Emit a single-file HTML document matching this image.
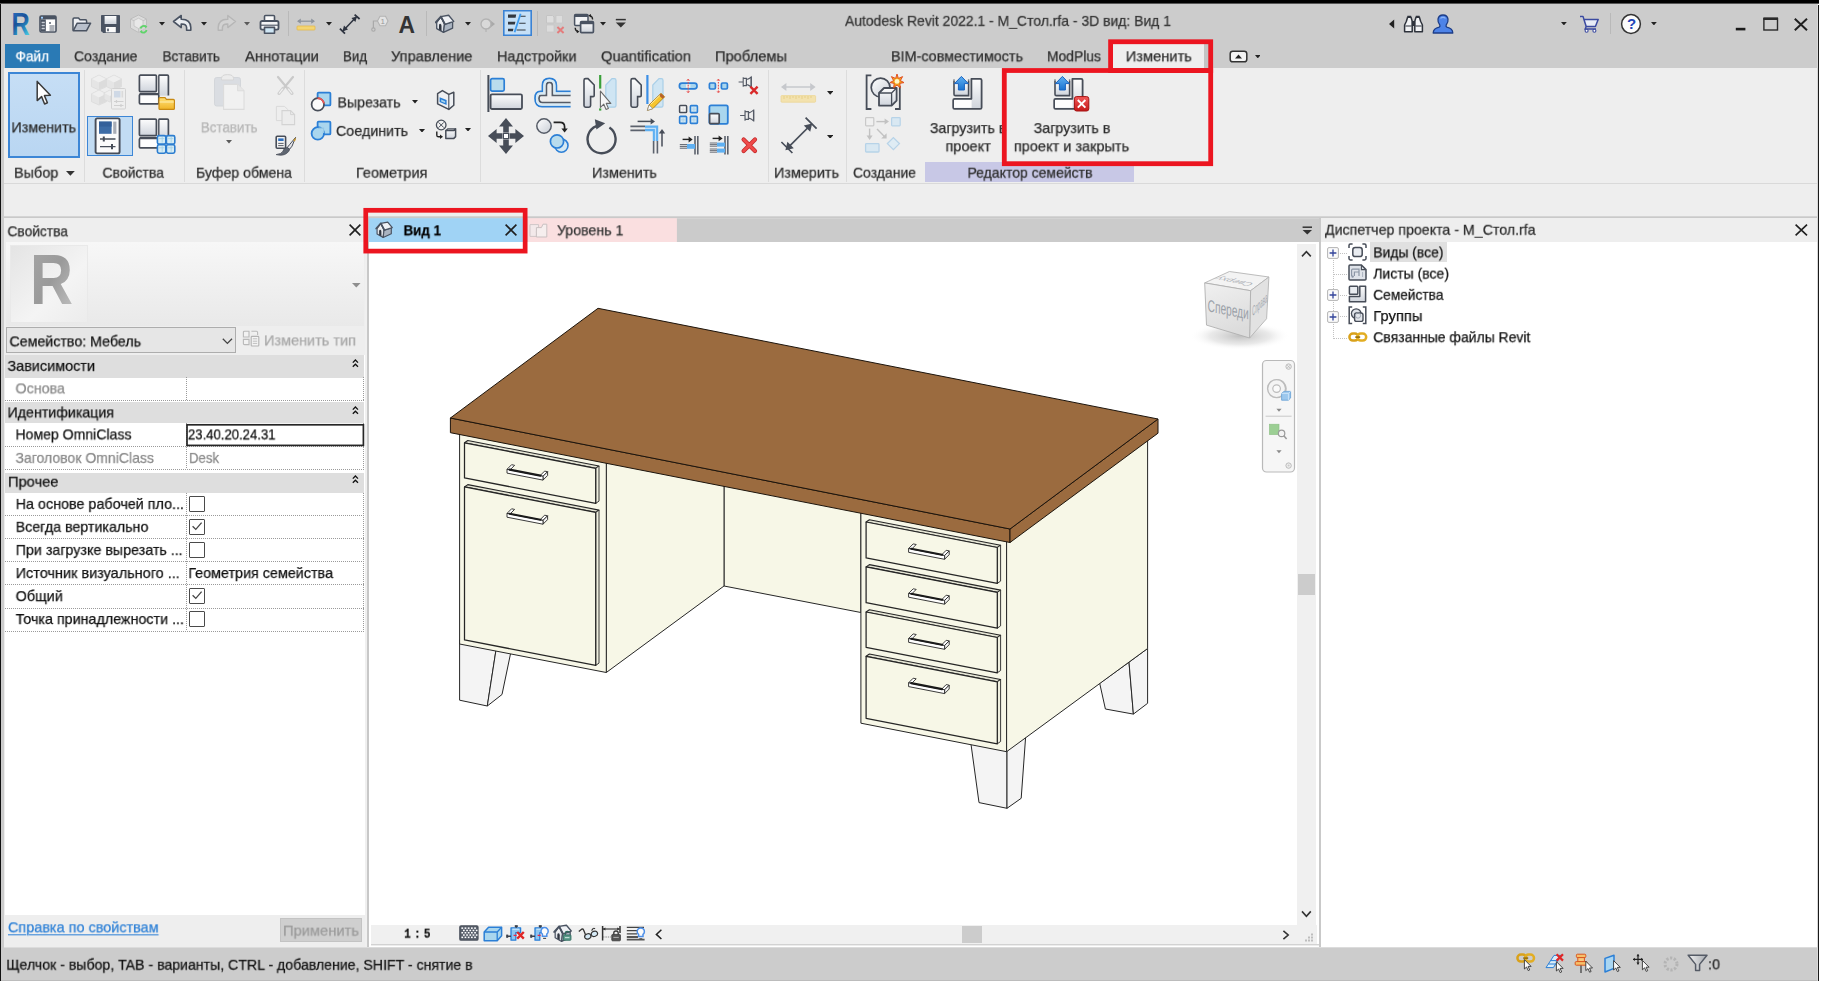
<!DOCTYPE html>
<html lang="ru"><head><meta charset="utf-8"><title>Autodesk Revit 2022.1 - М_Стол.rfa - 3D вид: Вид 1</title>
<style>
html,body{margin:0;padding:0;background:#fff;}
#app{position:relative;width:1821px;height:981px;overflow:hidden;background:#fff;font-family:"Liberation Sans",sans-serif;}
#app div,#app span,#app svg{position:absolute;}
.t{-webkit-text-stroke:0.25px currentColor;will-change:transform;white-space:nowrap;line-height:20px;height:20px;transform-origin:0 50%;font-family:"Liberation Sans",sans-serif;}
.hd{left:5px;width:359px;height:1px;background-image:linear-gradient(90deg,#9a9a9a 50%,transparent 50%);background-size:2px 1px;}
.vd{width:1px;background-image:linear-gradient(180deg,#9a9a9a 50%,transparent 50%);background-size:1px 2px;}
.cb{left:189px;background:#fff;border:1px solid #4a4a4a;box-sizing:border-box;width:16px;height:16px;border-radius:1px;}

</style></head>
<body>
<div id="app">
<!-- window chrome -->
<div style="left:0;top:0;width:1819px;height:3px;background:#000"></div><div style="left:0;top:3px;width:1819px;height:1px;background:#555"></div>
<div style="left:0;top:4px;width:1px;height:977px;background:#111"></div>
<div style="left:1px;top:4px;width:3px;height:977px;background:#cccccc"></div>
<div style="left:1817px;top:4px;width:1px;height:977px;background:#d8d8d8"></div><div style="left:1818px;top:5px;width:1px;height:976px;background:#1a1a1a"></div>
<!-- title + tab strip -->
<div style="left:4px;top:4px;width:1813px;height:64px;background:#cccccc"></div>
<div style="left:5px;top:44px;width:55px;height:24px;background:#2a7ab5"></div>
<div style="left:1113px;top:44px;width:91px;height:24px;background:#eee"></div><div style="left:1204px;top:44px;width:5px;height:24px;background:#c4c4c4"></div>
<!-- ribbon -->
<div style="left:4px;top:68px;width:1813px;height:115px;background:#eeeeee"></div>
<div style="left:4px;top:183px;width:1813px;height:1px;background:#d9d9d9"></div>
<div style="left:4px;top:184px;width:1813px;height:33px;background:#eeeeee"></div>
<svg style="left:4px;top:216px" width="1813" height="3" viewBox="0 0 1813 3"><rect x="0" y="0.3" width="1813" height="1.9" fill="#c9c9c9"/></svg>
<!-- ribbon panel separators -->
<div style="left:84px;top:70px;width:1px;height:112px;background:#dcdcdc"></div>
<div style="left:184px;top:70px;width:1px;height:112px;background:#dcdcdc"></div>
<div style="left:304px;top:70px;width:1px;height:112px;background:#dcdcdc"></div>
<div style="left:480px;top:70px;width:1px;height:112px;background:#dcdcdc"></div>
<div style="left:768px;top:70px;width:1px;height:112px;background:#dcdcdc"></div>
<div style="left:846px;top:70px;width:1px;height:112px;background:#dcdcdc"></div>
<!-- ribbon active buttons -->
<div style="left:7.5px;top:72px;width:68.5px;height:81.7px;background:linear-gradient(180deg,#c6def5,#b9d6f2);border:2px solid #3c86d6"></div>
<div style="left:87px;top:116px;width:46px;height:40px;box-sizing:border-box;background:#c2dcf3;border:1px solid #3c86d6"></div>
<div style="left:503px;top:10px;width:29px;height:26px;box-sizing:border-box;background:#c6e0f7;border:1px solid #3a82d4;box-shadow:inset 0 0 0 0.6px #3a82d4"></div>
<!-- family editor contextual label -->
<div style="left:925px;top:162px;width:209px;height:20px;background:#c8c8e6"></div>
<!-- quick-access separators -->
<div style="left:288px;top:11px;width:1px;height:25px;background:#b9b9b9"></div>
<div style="left:426px;top:11px;width:1px;height:25px;background:#b9b9b9"></div>
<div style="left:537px;top:11px;width:1px;height:25px;background:#b9b9b9"></div>
<div style="left:1610px;top:13px;width:1px;height:21px;background:#b9b9b9"></div>

<!-- ===== properties palette ===== -->
<div style="left:4px;top:218px;width:363px;height:729px;background:#eeeeee"></div>
<div style="left:6px;top:242px;width:358px;height:84px;background:linear-gradient(180deg,#f7f7f7,#e9e9e9)"></div>
<div style="left:10px;top:245px;width:78px;height:78px;background:linear-gradient(135deg,#e4e4e4,#f4f4f4 60%,#ececec);border:1px solid #e9e9e9;box-sizing:border-box"></div>
<div style="left:6px;top:327px;width:230px;height:26px;background:#e6e6e6;border:1px solid #adadad;box-sizing:border-box"></div>
<!-- grid -->
<div style="left:5px;top:355px;width:360px;height:560px;background:#fff"></div>
<div style="left:5px;top:355px;width:359px;height:22.5px;background:#dedede"></div>
<div style="left:5px;top:402px;width:359px;height:21.4px;background:#dedede"></div>
<div style="left:5px;top:473px;width:359px;height:20px;background:#dedede"></div>
<!-- dotted grid lines -->
<div class="hd" style="top:400px"></div>
<div class="hd" style="top:446px"></div>
<div class="hd" style="top:469px"></div>
<div class="hd" style="top:515px"></div>
<div class="hd" style="top:538px"></div>
<div class="hd" style="top:561px"></div>
<div class="hd" style="top:584px"></div>
<div class="hd" style="top:608px"></div>
<div class="hd" style="top:631px"></div>
<div class="vd" style="left:186px;top:377px;height:23px"></div>
<div class="vd" style="left:186px;top:423px;height:46px"></div>
<div class="vd" style="left:186px;top:493px;height:138px"></div>
<div class="vd" style="left:363px;top:377px;height:23px"></div>
<div class="vd" style="left:363px;top:423px;height:46px"></div>
<div class="vd" style="left:363px;top:493px;height:138px"></div>
<!-- focused input -->
<svg style="left:184px;top:422px" width="182" height="26" viewBox="184 422 182 26"><rect x="187" y="424.8" width="176.4" height="20.6" fill="#fff" stroke="#262626" stroke-width="1.7"/></svg>
<!-- checkboxes -->
<div class="cb" style="top:496px"></div>
<div class="cb" style="top:519px"></div>
<div class="cb" style="top:542px"></div>
<div class="cb" style="top:588px"></div>
<div class="cb" style="top:611px"></div>
<!-- apply button -->
<div style="left:280px;top:918px;width:82px;height:24px;background:#cfcfcf;border:1px solid #c3c3c3;box-sizing:border-box"></div>
<!-- palette right edge -->
<div style="left:365px;top:218px;width:2px;height:729px;background:#f0f0f0"></div>
<div style="left:367px;top:218px;width:2px;height:729px;background:#c8c8c8"></div>

<!-- ===== view area ===== -->
<svg style="left:369px;top:216px" width="950" height="28" viewBox="369 216 950 28"><rect x="369" y="218.2" width="950.3" height="23.8" fill="#cbcbcb"/><rect x="369" y="218.2" width="155" height="23.9" fill="#a0d3f5"/><rect x="527.6" y="218.2" width="149.3" height="23.9" fill="#fadfe0"/></svg>
<div style="left:369px;top:242px;width:950px;height:683px;background:#fff"></div>
<!-- scrollbars -->
<div style="left:1297px;top:244px;width:19px;height:681px;background:#f0f0f0"></div>
<div style="left:1298px;top:574px;width:17px;height:21px;background:#cccccc"></div>
<div style="left:371px;top:925px;width:946px;height:19px;background:#f0f0f0"></div>
<div style="left:962px;top:926px;width:20px;height:17px;background:#cccccc"></div>
<div style="left:371px;top:944px;width:948px;height:1px;background:#d2d2d2"></div><div style="left:371px;top:945px;width:948px;height:1px;background:#ececec"></div>
<!-- view right edge -->
<div style="left:1319px;top:218px;width:2px;height:729px;background:#c9c9c9"></div>

<!-- ===== project browser ===== -->
<div style="left:1321px;top:218px;width:496px;height:24px;background:#eeeeee"></div>
<div style="left:1321px;top:242px;width:496px;height:705px;background:#fff"></div>
<div style="left:1370px;top:242px;width:77px;height:20.4px;background:#e0e0e0"></div>

<!-- ===== status bar ===== -->
<div style="left:4px;top:947px;width:1813px;height:1px;background:#dcdcdc"></div><div style="left:4px;top:948px;width:1813px;height:33px;background:#cccccc"></div><div style="left:1px;top:980px;width:1816px;height:1px;background:#bcbcbc"></div>

<svg style="left:369px;top:243px" width="928" height="682" viewBox="369 243 928 682">
<polygon points="1099.7,683.3 1129.0,662.2 1133.4,714.1 1105.4,709.0" fill="#f4f4f4" stroke="#262626" stroke-width="1" stroke-linejoin="round"/>
<polygon points="1129.0,662.2 1147.6,648.5 1147.6,703.3 1133.4,714.1" fill="#f4f4f4" stroke="#262626" stroke-width="1" stroke-linejoin="round"/>
<polygon points="459.6,640.0 496.3,648.0 487.3,706.0 459.6,700.2" fill="#f4f4f4" stroke="#262626" stroke-width="1" stroke-linejoin="round"/>
<polygon points="496.3,648.0 511.3,650.0 502.0,694.5 487.3,706.0" fill="#f4f4f4" stroke="#262626" stroke-width="1" stroke-linejoin="round"/>
<polygon points="970.7,742.0 1007.0,749.0 1007.0,808.3 979.0,802.6" fill="#f4f4f4" stroke="#262626" stroke-width="1" stroke-linejoin="round"/>
<polygon points="1007.0,749.0 1025.7,736.0 1021.2,798.3 1007.0,808.3" fill="#f4f4f4" stroke="#262626" stroke-width="1" stroke-linejoin="round"/>
<polygon points="724.0,480.0 860.9,507.0 860.9,612.5 724.0,586.0" fill="#f7f7e7" stroke="#262626" stroke-width="1" stroke-linejoin="round"/>
<polygon points="606.3,458.0 724.0,480.0 724.0,586.0 606.3,672.5" fill="#f7f7e7" stroke="#262626" stroke-width="1" stroke-linejoin="round"/>
<polygon points="459.6,430.0 606.3,458.0 606.3,672.5 459.6,644.0" fill="#f7f7e7" stroke="#262626" stroke-width="1" stroke-linejoin="round"/>
<polygon points="860.9,507.0 1006.6,536.0 1006.6,751.7 860.9,723.2" fill="#f7f7e7" stroke="#262626" stroke-width="1" stroke-linejoin="round"/>
<polygon points="1006.6,536.0 1147.6,436.0 1147.6,648.5 1006.6,751.7" fill="#f7f7e7" stroke="#262626" stroke-width="1" stroke-linejoin="round"/>
<polygon points="464.5,442.8 467.8,440.5 599.0,466.0 595.7,468.3" fill="#e4e4d4" stroke="#262626" stroke-width="1.1" stroke-linejoin="round"/>
<polygon points="595.7,468.3 599.0,466.0 599.0,501.1 595.7,503.4" fill="#efefdf" stroke="#262626" stroke-width="0.9" stroke-linejoin="round"/>
<polygon points="464.5,442.8 595.7,468.3 595.7,503.4 464.5,477.9" fill="#f7f7e7" stroke="#262626" stroke-width="1.25" stroke-linejoin="round"/>
<polygon points="507.0,469.3 511.6,464.7 514.6,465.3 510.0,469.9" fill="#fff" stroke="#262626" stroke-width="0.9" stroke-linejoin="round"/>
<polygon points="540.0,475.7 544.6,471.1 547.6,471.7 543.0,476.3" fill="#fff" stroke="#262626" stroke-width="0.9" stroke-linejoin="round"/>
<polygon points="543.0,476.3 547.6,471.7 547.6,475.5 543.0,480.1" fill="#f4f4f4" stroke="#262626" stroke-width="0.9" stroke-linejoin="round"/>
<polygon points="507.0,469.3 543.0,476.3 543.0,480.1 507.0,473.1" fill="#fff" stroke="#262626" stroke-width="0.9" stroke-linejoin="round"/>
<polyline points="509.6,469.6 540.4,475.6" fill="none" stroke="#1a1a1a" stroke-width="2.1" stroke-linecap="round"/>
<polygon points="464.5,486.9 467.8,484.6 599.0,510.1 595.7,512.4" fill="#e4e4d4" stroke="#262626" stroke-width="1.1" stroke-linejoin="round"/>
<polygon points="595.7,512.4 599.0,510.1 599.0,663.1 595.7,665.4" fill="#efefdf" stroke="#262626" stroke-width="0.9" stroke-linejoin="round"/>
<polygon points="464.5,486.9 595.7,512.4 595.7,665.4 464.5,639.9" fill="#f7f7e7" stroke="#262626" stroke-width="1.25" stroke-linejoin="round"/>
<polygon points="507.0,513.4 511.6,508.8 514.6,509.4 510.0,514.0" fill="#fff" stroke="#262626" stroke-width="0.9" stroke-linejoin="round"/>
<polygon points="540.0,519.8 544.6,515.2 547.6,515.8 543.0,520.4" fill="#fff" stroke="#262626" stroke-width="0.9" stroke-linejoin="round"/>
<polygon points="543.0,520.4 547.6,515.8 547.6,519.6 543.0,524.2" fill="#f4f4f4" stroke="#262626" stroke-width="0.9" stroke-linejoin="round"/>
<polygon points="507.0,513.4 543.0,520.4 543.0,524.2 507.0,517.2" fill="#fff" stroke="#262626" stroke-width="0.9" stroke-linejoin="round"/>
<polyline points="509.6,513.7 540.4,519.7" fill="none" stroke="#1a1a1a" stroke-width="2.1" stroke-linecap="round"/>
<polygon points="866.1,522.0 869.4,519.7 1000.6,545.2 997.3,547.5" fill="#e4e4d4" stroke="#262626" stroke-width="1.1" stroke-linejoin="round"/>
<polygon points="997.3,547.5 1000.6,545.2 1000.6,581.1 997.3,583.4" fill="#efefdf" stroke="#262626" stroke-width="0.9" stroke-linejoin="round"/>
<polygon points="866.1,522.0 997.3,547.5 997.3,583.4 866.1,557.9" fill="#f7f7e7" stroke="#262626" stroke-width="1.25" stroke-linejoin="round"/>
<polygon points="908.6,548.5 913.2,543.9 916.2,544.5 911.6,549.1" fill="#fff" stroke="#262626" stroke-width="0.9" stroke-linejoin="round"/>
<polygon points="941.6,554.9 946.2,550.3 949.2,550.9 944.6,555.5" fill="#fff" stroke="#262626" stroke-width="0.9" stroke-linejoin="round"/>
<polygon points="944.6,555.5 949.2,550.9 949.2,554.7 944.6,559.3" fill="#f4f4f4" stroke="#262626" stroke-width="0.9" stroke-linejoin="round"/>
<polygon points="908.6,548.5 944.6,555.5 944.6,559.3 908.6,552.3" fill="#fff" stroke="#262626" stroke-width="0.9" stroke-linejoin="round"/>
<polyline points="911.2,548.8 942.0,554.8" fill="none" stroke="#1a1a1a" stroke-width="2.1" stroke-linecap="round"/>
<polygon points="866.1,566.9 869.4,564.6 1000.6,590.1 997.3,592.4" fill="#e4e4d4" stroke="#262626" stroke-width="1.1" stroke-linejoin="round"/>
<polygon points="997.3,592.4 1000.6,590.1 1000.6,625.9 997.3,628.2" fill="#efefdf" stroke="#262626" stroke-width="0.9" stroke-linejoin="round"/>
<polygon points="866.1,566.9 997.3,592.4 997.3,628.2 866.1,602.7" fill="#f7f7e7" stroke="#262626" stroke-width="1.25" stroke-linejoin="round"/>
<polygon points="908.6,593.4 913.2,588.8 916.2,589.4 911.6,594.0" fill="#fff" stroke="#262626" stroke-width="0.9" stroke-linejoin="round"/>
<polygon points="941.6,599.8 946.2,595.2 949.2,595.8 944.6,600.4" fill="#fff" stroke="#262626" stroke-width="0.9" stroke-linejoin="round"/>
<polygon points="944.6,600.4 949.2,595.8 949.2,599.6 944.6,604.2" fill="#f4f4f4" stroke="#262626" stroke-width="0.9" stroke-linejoin="round"/>
<polygon points="908.6,593.4 944.6,600.4 944.6,604.2 908.6,597.2" fill="#fff" stroke="#262626" stroke-width="0.9" stroke-linejoin="round"/>
<polyline points="911.2,593.7 942.0,599.7" fill="none" stroke="#1a1a1a" stroke-width="2.1" stroke-linecap="round"/>
<polygon points="866.1,612.0 869.4,609.7 1000.6,635.2 997.3,637.5" fill="#e4e4d4" stroke="#262626" stroke-width="1.1" stroke-linejoin="round"/>
<polygon points="997.3,637.5 1000.6,635.2 1000.6,670.5 997.3,672.8" fill="#efefdf" stroke="#262626" stroke-width="0.9" stroke-linejoin="round"/>
<polygon points="866.1,612.0 997.3,637.5 997.3,672.8 866.1,647.3" fill="#f7f7e7" stroke="#262626" stroke-width="1.25" stroke-linejoin="round"/>
<polygon points="908.6,638.5 913.2,633.9 916.2,634.5 911.6,639.1" fill="#fff" stroke="#262626" stroke-width="0.9" stroke-linejoin="round"/>
<polygon points="941.6,644.9 946.2,640.3 949.2,640.9 944.6,645.5" fill="#fff" stroke="#262626" stroke-width="0.9" stroke-linejoin="round"/>
<polygon points="944.6,645.5 949.2,640.9 949.2,644.7 944.6,649.3" fill="#f4f4f4" stroke="#262626" stroke-width="0.9" stroke-linejoin="round"/>
<polygon points="908.6,638.5 944.6,645.5 944.6,649.3 908.6,642.3" fill="#fff" stroke="#262626" stroke-width="0.9" stroke-linejoin="round"/>
<polyline points="911.2,638.8 942.0,644.8" fill="none" stroke="#1a1a1a" stroke-width="2.1" stroke-linecap="round"/>
<polygon points="866.1,656.3 869.4,654.0 1000.6,679.5 997.3,681.8" fill="#e4e4d4" stroke="#262626" stroke-width="1.1" stroke-linejoin="round"/>
<polygon points="997.3,681.8 1000.6,679.5 1000.6,741.5 997.3,743.8" fill="#efefdf" stroke="#262626" stroke-width="0.9" stroke-linejoin="round"/>
<polygon points="866.1,656.3 997.3,681.8 997.3,743.8 866.1,718.3" fill="#f7f7e7" stroke="#262626" stroke-width="1.25" stroke-linejoin="round"/>
<polygon points="908.6,682.8 913.2,678.2 916.2,678.8 911.6,683.4" fill="#fff" stroke="#262626" stroke-width="0.9" stroke-linejoin="round"/>
<polygon points="941.6,689.2 946.2,684.6 949.2,685.2 944.6,689.8" fill="#fff" stroke="#262626" stroke-width="0.9" stroke-linejoin="round"/>
<polygon points="944.6,689.8 949.2,685.2 949.2,689.0 944.6,693.6" fill="#f4f4f4" stroke="#262626" stroke-width="0.9" stroke-linejoin="round"/>
<polygon points="908.6,682.8 944.6,689.8 944.6,693.6 908.6,686.6" fill="#fff" stroke="#262626" stroke-width="0.9" stroke-linejoin="round"/>
<polyline points="911.2,683.1 942.0,689.1" fill="none" stroke="#1a1a1a" stroke-width="2.1" stroke-linecap="round"/>
<polygon points="450.4,418.0 1010.0,529.0 1010.0,542.5 450.4,432.7" fill="#9b6b3f" stroke="#1c140c" stroke-width="1" stroke-linejoin="round"/>
<polygon points="1010.0,529.0 1158.0,419.0 1158.0,433.2 1010.0,542.5" fill="#9b6b3f" stroke="#1c140c" stroke-width="1" stroke-linejoin="round"/>
<polygon points="598.0,308.3 1158.0,419.0 1010.0,529.0 450.4,418.0" fill="#9b6b3f" stroke="#1c140c" stroke-width="1" stroke-linejoin="round"/>
</svg>

<svg width="0" height="0" style="left:0;top:0"><defs>
<linearGradient id="gR" x1="0" y1="0" x2="0.45" y2="1"><stop offset="0" stop-color="#2b78cc"/><stop offset="0.5" stop-color="#1b5299"/><stop offset="0.8" stop-color="#2a8fc4"/><stop offset="1" stop-color="#45c4e0"/></linearGradient>
<linearGradient id="gW" x1="0" y1="0" x2="0" y2="1"><stop offset="0" stop-color="#fdfdfd"/><stop offset="1" stop-color="#cfd4dc"/></linearGradient>
<linearGradient id="gW2" x1="0" y1="0" x2="1" y2="1"><stop offset="0" stop-color="#ffffff"/><stop offset="1" stop-color="#c9ced6"/></linearGradient>
<linearGradient id="gB" x1="0" y1="0" x2="0" y2="1"><stop offset="0" stop-color="#bfe0f7"/><stop offset="1" stop-color="#6fb4e8"/></linearGradient>
<linearGradient id="gG" x1="0" y1="0" x2="1" y2="1"><stop offset="0" stop-color="#f4f4f4"/><stop offset="1" stop-color="#d9d9d9"/></linearGradient>
<linearGradient id="gY" x1="0" y1="0" x2="0" y2="1"><stop offset="0" stop-color="#ffe27a"/><stop offset="1" stop-color="#f0b428"/></linearGradient>
<linearGradient id="gRed" x1="0" y1="0" x2="0" y2="1"><stop offset="0" stop-color="#f25a5a"/><stop offset="1" stop-color="#c41818"/></linearGradient>
<linearGradient id="gLB" x1="0" y1="0" x2="0" y2="1"><stop offset="0" stop-color="#5fb0f2"/><stop offset="1" stop-color="#1a73d0"/></linearGradient>
</defs></svg>
<svg style="left:9px;top:8px" width="24" height="30" viewBox="0 0 24 30"><text x="2.6" y="26.7" font-family="Liberation Sans, sans-serif" font-weight="700" font-size="31" fill="url(#gR)" textLength="18.2" lengthAdjust="spacingAndGlyphs">R</text></svg>
<svg style="left:39px;top:15px" width="18" height="18" viewBox="0 0 18 18"><rect x="1" y="1" width="16" height="16" rx="1.2" fill="#fff" stroke="#4a5362" stroke-width="1.6"/>
<rect x="1" y="1" width="16" height="3.4" fill="#4a5362"/><rect x="2" y="1.8" width="2" height="1.8" fill="#9fd0ff"/>
<rect x="1.6" y="4.4" width="5.2" height="12" fill="#4a5362"/><path d="M2.6 7.5h3.2M2.6 10.5h3.2M2.6 13.5h3.2" stroke="#c9ced6" stroke-width="1.4"/>
<path d="M10 8h2M11 7v2M10.5 11h5M10.5 13h5M10.5 15h5" stroke="#4a5362" stroke-width="0.9"/></svg>
<svg style="left:71px;top:16px" width="21" height="17" viewBox="0 0 21 17"><path d="M2 14.5V3.2Q2 2 3.2 2H7.5L9 3.8H14.5Q15.6 3.8 15.6 5V7" fill="#eef0f4" stroke="#4a5362" stroke-width="1.5" stroke-linejoin="round"/>
<path d="M2.2 14.8L6.2 7.2H19.6L15.4 14.8Z" fill="#b9c0cc" stroke="#4a5362" stroke-width="1.5" stroke-linejoin="round"/></svg>
<svg style="left:100px;top:14px" width="21" height="20" viewBox="0 0 21 20"><path d="M1.5 1.5H19.5V18.5H3L1.5 17Z" fill="#4a5362" stroke="#4a5362" stroke-width="1" stroke-linejoin="round"/>
<rect x="4.6" y="2" width="11.8" height="8" fill="url(#gW)"/><rect x="5.8" y="13" width="10" height="5.4" fill="#fafafa"/><rect x="7.2" y="14.6" width="1.6" height="2.6" fill="#4a5362"/></svg>
<svg style="left:129px;top:14px" width="20" height="21" viewBox="0 0 20 21"><path d="M9.5 1L17.5 5V14L9.5 18.5L1.5 14V5Z" fill="#dcdcdc" stroke="#bdbdbd" stroke-width="1"/><path d="M9.5 9.2L17.5 5M9.5 9.2L1.5 5M9.5 9.2V18.5" stroke="#c4c4c4" stroke-width="1" fill="none"/>
<path d="M5 6.5L9.5 4.2L14 6.5V12L9.5 14.5L5 12Z" fill="#e8e8e8" stroke="#c2c2c2" stroke-width="0.8"/>
<circle cx="14.5" cy="15.2" r="4.6" fill="#cfcfcf" opacity="0.6"/><path d="M11.5 14.5A3.3 3.3 0 0 1 17 12.8M17.6 16A3.3 3.3 0 0 1 12 17.6" stroke="#5fd46a" stroke-width="1.9" fill="none"/><path d="M15.8 11.3L18.4 12.6L16.4 14.6ZM13.2 19.2L10.8 17.6L13 16Z" fill="#5fd46a"/></svg>
<svg style="left:158.5px;top:22px" width="6" height="3.5" viewBox="0 0 6 3.5"><path d="M0 0H6L3.0 3.5Z" fill="#222"/></svg>
<svg style="left:172px;top:14px" width="21" height="18" viewBox="0 0 21 18"><path d="M1.5 7.5L9.2 1.5V5.2Q18.5 5 18.8 13.5V16.2H14.6V13.6Q14.4 9.8 9.2 10V13.6Z" fill="#e9ecf0" stroke="#4a5362" stroke-width="1.6" stroke-linejoin="round"/></svg>
<svg style="left:200.5px;top:22px" width="6" height="3.5" viewBox="0 0 6 3.5"><path d="M0 0H6L3.0 3.5Z" fill="#222"/></svg>
<svg style="left:216px;top:14px" width="21" height="18" viewBox="0 0 21 18"><path d="M19.5 7.5L11.8 1.5V5.2Q2.5 5 2.2 13.5V16.2H6.4V13.6Q6.6 9.8 11.8 10V13.6Z" fill="#d2d2d2" stroke="#b6b6b6" stroke-width="1.4" stroke-linejoin="round"/></svg>
<svg style="left:244px;top:22px" width="6" height="3.5" viewBox="0 0 6 3.5"><path d="M0 0H6L3.0 3.5Z" fill="#5a5a5a"/></svg>
<svg style="left:259px;top:14px" width="21" height="21" viewBox="0 0 21 21"><path d="M5.5 7V2.6Q5.5 1.5 6.6 1.5H14.4Q15.5 1.5 15.5 2.6V7" fill="#fafafa" stroke="#4a5362" stroke-width="1.6"/>
<rect x="1.5" y="7" width="18" height="8.6" rx="1.6" fill="#f2f3f5" stroke="#4a5362" stroke-width="1.8"/><path d="M2 11.2H19" stroke="#4a5362" stroke-width="1.1"/>
<path d="M5.5 13.4H15.5V19.2H5.5Z" fill="#cfe6f4" stroke="#4a5362" stroke-width="1.6" stroke-linejoin="round"/></svg>
<svg style="left:296px;top:17px" width="20" height="14" viewBox="0 0 20 14"><path d="M2 4.2H18" stroke="#8d949e" stroke-width="1.3"/><path d="M1 4.2L4.8 1.6V6.8ZM19 4.2L15.2 1.6V6.8Z" fill="#8d949e"/>
<rect x="1" y="9" width="18" height="4" rx="0.8" fill="#f3d573" stroke="#e4b94a" stroke-width="0.8"/></svg>
<svg style="left:325.5px;top:22px" width="6" height="3.5" viewBox="0 0 6 3.5"><path d="M0 0H6L3.0 3.5Z" fill="#222"/></svg>
<svg style="left:339px;top:13px" width="22" height="22" viewBox="0 0 22 22"><path d="M4.4 17.6L17.2 4" stroke="#2e3440" stroke-width="1.5"/><path d="M0.9 15.7L6 20.6M15.6 1.6L20.6 6" stroke="#2e3440" stroke-width="1.8"/>
<path d="M3.4 18.4L5 12.6L9 16.6ZM18 3.4L12.4 5L16.4 9Z" fill="#2e3440"/></svg>
<svg style="left:369px;top:14px" width="20" height="19" viewBox="0 0 20 19"><path d="M11 2.2L16.5 2.2L19 7L16.5 11.8H11L8.5 7Z" fill="#e3e3e3" stroke="#b4b4b4" stroke-width="1.1"/>
<path d="M8.5 7H4.4V14" stroke="#a9a9a9" stroke-width="1.2" fill="none"/><circle cx="4.4" cy="15.6" r="1.7" fill="none" stroke="#a9a9a9" stroke-width="1.1"/>
<text x="11.6" y="10" font-family="Liberation Sans, sans-serif" font-size="8" fill="#9a9a9a">1</text></svg>
<svg style="left:397px;top:12px" width="20" height="24" viewBox="0 0 20 24"><text x="1.6" y="20.6" font-family="Liberation Sans, sans-serif" font-weight="700" font-size="24" fill="#333" textLength="16.5" lengthAdjust="spacingAndGlyphs">A</text></svg>
<svg style="left:435px;top:14px" width="20" height="19" viewBox="0 0 20 19"><path d="M1.7 8.6L5.9 2.8L9.6 10.2L8.5 18.4L1.7 14.6Z" fill="url(#gW)" stroke="#4a5362" stroke-width="1.3" stroke-linejoin="round"/>
<path d="M9.4 10.4L17.6 7.8V14.2L8.5 18.4Z" fill="#aab4c1" stroke="#4a5362" stroke-width="1.3" stroke-linejoin="round"/>
<path d="M5.9 2.6L13.6 1.3L18.7 7.4L9.9 10.3Z" fill="#eff1f5" stroke="#4a5362" stroke-width="1.4" stroke-linejoin="round"/>
<path d="M0.7 8.4L5.9 2.6L9.9 10.3" fill="none" stroke="#4a5362" stroke-width="1.9" stroke-linejoin="round" stroke-linecap="round"/>
<path d="M4 15.6V11.4Q4 9.6 5.3 9.8Q6.5 10 6.5 12V17Z" fill="#2f3540"/></svg>
<svg style="left:464.5px;top:22px" width="6" height="3.5" viewBox="0 0 6 3.5"><path d="M0 0H6L3.0 3.5Z" fill="#222"/></svg>
<svg style="left:479px;top:15px" width="18" height="18" viewBox="0 0 18 18"><path d="M9 3.4L16 9L9 14.6Z" fill="#a9a9a9"/><circle cx="7" cy="9" r="5" fill="#d9d9d9" stroke="#b2b2b2" stroke-width="1.3"/><path d="M7 14V17" stroke="#b2b2b2" stroke-width="1.2"/></svg>
<svg style="left:506px;top:13px" width="24" height="20" viewBox="0 0 24 20"><path d="M2 1.6H10.2L9.6 4.8H2ZM2 8.8H9.4L8.8 11.6H2ZM2 15.8H7.4L6.9 18.2H2Z" fill="#333840"/>
<path d="M14.2 3.2H19.6M13.2 10.2H19.6M10.6 17H19.6" stroke="#333840" stroke-width="1.1"/><path d="M14.6 0.8L8.6 19.2" stroke="#3f9cf0" stroke-width="1.8"/></svg>
<svg style="left:545px;top:14px" width="21" height="20" viewBox="0 0 21 20"><path d="M1.5 1.5H7.5L9 3V9H1.5Z" fill="#dedede" stroke="#c4c4c4" stroke-width="1"/><rect x="11" y="1.5" width="6.5" height="7.5" fill="#dcdcdc" stroke="#c8c8c8" stroke-width="0.8"/><rect x="1.5" y="11" width="7.5" height="7" fill="#dcdcdc" stroke="#c8c8c8" stroke-width="0.8"/>
<path d="M12.4 13L18.6 19M18.6 13L12.4 19" stroke="#e47c7c" stroke-width="2"/></svg>
<svg style="left:573px;top:13px" width="22" height="21" viewBox="0 0 22 21"><rect x="1.6" y="1.6" width="13.4" height="11" rx="1" fill="#f2f3f5" stroke="#4a5362" stroke-width="1.5"/><rect x="1.6" y="1.6" width="13.4" height="2.4" fill="#4a5362"/>
<rect x="7.6" y="8.6" width="12.8" height="11" rx="1" fill="url(#gW)" stroke="#4a5362" stroke-width="1.7"/><rect x="7.6" y="8.6" width="12.8" height="2.6" fill="#4a5362"/>
<path d="M16.6 2.6Q19.6 3.2 19.6 6.4" stroke="#222" stroke-width="1.3" fill="none"/><path d="M15.4 2.4L18 1V4.4Z" fill="#222"/><path d="M5.2 18.6Q2.2 18 2.2 14.8" stroke="#222" stroke-width="1.3" fill="none"/><path d="M6.4 18.8L3.8 20.2V16.8Z" fill="#222"/></svg>
<svg style="left:600px;top:22px" width="6" height="3.5" viewBox="0 0 6 3.5"><path d="M0 0H6L3.0 3.5Z" fill="#222"/></svg>
<svg style="left:615px;top:18px" width="12" height="11" viewBox="0 0 12 11"><path d="M0.8 1.6H10.8" stroke="#333" stroke-width="1.5"/><path d="M0.8 4.6H10.8L5.8 9.6Z" fill="#333"/></svg>
<svg style="left:34px;top:79px" width="19" height="28" viewBox="0 0 19 28"><path d="M3.2 2.4V21.6L7.6 17.6L10.6 25L13.4 23.8L10.4 16.6L16.4 16.2Z" fill="#fff" stroke="#3a3a3a" stroke-width="1.5" stroke-linejoin="round"/></svg>
<svg style="left:66px;top:171.4px" width="8.8" height="4.8" viewBox="0 0 8.8 4.8"><path d="M0 0H8.8L4.4 4.8Z" fill="#333"/></svg>
<svg style="left:90px;top:74px" width="38" height="37" viewBox="0 0 38 37"><path d="M1.5 4.75L9.0 1L16.5 4.75V12.700000000000001L9.0 16L1.5 12.700000000000001Z" fill="#e5e5e5" stroke="#dadada" stroke-width="0.8" stroke-linejoin="round"/><path d="M2.1 5.050000000000001L9.0 1.6L15.9 5.050000000000001L9.0 8.5Z" fill="#efefef"/><path d="M9.0 8.5L16.1 5.050000000000001V12.4L9.0 15.4Z" fill="#dcdcdc"/><path d="M16.5 4.75L24.0 1L31.5 4.75V12.700000000000001L24.0 16L16.5 12.700000000000001Z" fill="#e5e5e5" stroke="#dadada" stroke-width="0.8" stroke-linejoin="round"/><path d="M17.1 5.050000000000001L24.0 1.6L30.9 5.050000000000001L24.0 8.5Z" fill="#efefef"/><path d="M24.0 8.5L31.1 5.050000000000001V12.4L24.0 15.4Z" fill="#dcdcdc"/><path d="M1.5 19.75L9.0 16L16.5 19.75V27.700000000000003L9.0 31L1.5 27.700000000000003Z" fill="#e5e5e5" stroke="#dadada" stroke-width="0.8" stroke-linejoin="round"/><path d="M2.1 20.05L9.0 16.6L15.9 20.05L9.0 23.5Z" fill="#efefef"/><path d="M9.0 23.5L16.1 20.05V27.4L9.0 30.4Z" fill="#dcdcdc"/><path d="M14 19.0L20.0 16L26 19.0V25.36L20.0 28L14 25.36Z" fill="#e5e5e5" stroke="#dadada" stroke-width="0.8" stroke-linejoin="round"/><path d="M14.6 19.240000000000002L20.0 16.6L25.4 19.240000000000002L20.0 22.0Z" fill="#efefef"/><path d="M20.0 22.0L25.6 19.240000000000002V25.12L20.0 27.4Z" fill="#dcdcdc"/><rect x="21.5" y="14.5" width="14" height="20.5" rx="1" fill="#eeeeee" stroke="#d2d2d2" stroke-width="1"/><rect x="24" y="17" width="6.5" height="6.5" fill="#cfd9e6"/><rect x="31.5" y="17" width="1.6" height="6.5" fill="#dadada"/>
 <path d="M24 27.5H33.5M24 31.5H33.5" stroke="#d0d0d0" stroke-width="1"/><path d="M26.5 26V29M31 30V33" stroke="#d0d0d0" stroke-width="1.2"/></svg>
<svg style="left:138px;top:74px" width="38" height="37" viewBox="0 0 38 37"><rect x="1.4" y="1.2" width="17" height="16.4" rx="1" fill="url(#gW)" stroke="#474d58" stroke-width="1.7"/>
<path d="M21.6 1.2H30.2V21.6H21.6" fill="url(#gW)"/><path d="M20.6 1.2H29.4Q30.4 1.2 30.4 2.2V21.4" fill="none" stroke="#474d58" stroke-width="1.7"/><path d="M20.8 1.2V19.6H1.6" fill="none" stroke="#474d58" stroke-width="1.4"/>
<rect x="1.4" y="20.4" width="19.4" height="9.4" rx="1" fill="#fdfdfd" stroke="#474d58" stroke-width="1.7"/><path d="M21 24.6Q21 23.6 22 23.6H27L28.4 25.4H35.4Q36.4 25.4 36.4 26.4V34.4Q36.4 35.4 35.4 35.4H22Q21 35.4 21 34.4Z" fill="url(#gY)" stroke="#c88a14" stroke-width="1.2"/><path d="M21.6 28H35.8" stroke="#fff3c0" stroke-width="0.9"/></svg>
<svg style="left:94px;top:117px" width="28" height="38" viewBox="0 0 28 38"><rect x="1.6" y="1.4" width="24" height="35" rx="1.6" fill="#fbfbfb" stroke="#474d58" stroke-width="1.9"/>
<rect x="5" y="4.6" width="12.6" height="12.2" fill="#3d6ca6"/><rect x="5" y="4.6" width="12.6" height="5" fill="#34609a"/><rect x="19.2" y="4.6" width="3.2" height="12.2" fill="#a9adb6"/>
<path d="M6 22H21.5M6 29.6H21.5" stroke="#474d58" stroke-width="1.3"/><path d="M9.8 19.4V24.6M18 27V32.2" stroke="#474d58" stroke-width="2"/></svg>
<svg style="left:138px;top:118px" width="38" height="37" viewBox="0 0 38 37"><rect x="1.4" y="1.2" width="17" height="16.4" rx="1" fill="url(#gW)" stroke="#474d58" stroke-width="1.7"/>
<path d="M21.6 1.2H30.2V21.6H21.6" fill="url(#gW)"/><path d="M20.6 1.2H29.4Q30.4 1.2 30.4 2.2V21.4" fill="none" stroke="#474d58" stroke-width="1.7"/><path d="M20.8 1.2V19.6H1.6" fill="none" stroke="#474d58" stroke-width="1.4"/>
<rect x="1.4" y="20.4" width="19.4" height="9.4" rx="1" fill="#fdfdfd" stroke="#474d58" stroke-width="1.7"/><rect x="19.4" y="17.6" width="8.4" height="8.4" rx="1.6" fill="#d6ecf4" stroke="#2d7ed0" stroke-width="1.6"/><path d="M20.799999999999997 20.6H26.4M24.2 19.0V24.6" stroke="#a7d3e6" stroke-width="0.9"/><rect x="28.4" y="17.6" width="8.4" height="8.4" rx="1.6" fill="#d6ecf4" stroke="#2d7ed0" stroke-width="1.6"/><path d="M29.799999999999997 20.6H35.4M33.2 19.0V24.6" stroke="#a7d3e6" stroke-width="0.9"/><rect x="19.4" y="26.8" width="8.4" height="8.4" rx="1.6" fill="#d6ecf4" stroke="#2d7ed0" stroke-width="1.6"/><path d="M20.799999999999997 29.8H26.4M24.2 28.2V33.800000000000004" stroke="#a7d3e6" stroke-width="0.9"/><rect x="28.4" y="26.8" width="8.4" height="8.4" rx="1.6" fill="#d6ecf4" stroke="#2d7ed0" stroke-width="1.6"/><path d="M29.799999999999997 29.8H35.4M33.2 28.2V33.800000000000004" stroke="#a7d3e6" stroke-width="0.9"/></svg>
<svg style="left:213px;top:73px" width="33" height="38" viewBox="0 0 33 38"><rect x="1.5" y="4.5" width="26" height="28.5" rx="2.2" fill="#dadde2" stroke="#d3d6da" stroke-width="1"/><path d="M8.5 5.5Q8.5 1.6 14.5 1.6Q20.5 1.6 20.5 5.5V7H8.5Z" fill="#ececec" stroke="#d6d6d6" stroke-width="1"/>
<path d="M10.6 11.4H24.6L31 17.8V36.4H10.6Z" fill="#f1f1f1" stroke="#dcdcdc" stroke-width="1.1"/><path d="M24.6 11.4V17.8H31" fill="#e6e6e6" stroke="#dcdcdc" stroke-width="1"/></svg>
<svg style="left:226px;top:140.3px" width="6" height="3.6" viewBox="0 0 6 3.6"><path d="M0 0H6L3.0 3.6Z" fill="#5a5a5a"/></svg>
<svg style="left:275px;top:75px" width="21" height="21" viewBox="0 0 21 21"><path d="M3 2L13.2 14.2M18 2L7.8 14.2" stroke="#c9c9c9" stroke-width="2.2" stroke-linecap="round"/><path d="M13 13.4L17 18.4M8 13.4L4 18.4" stroke="#d0d0d0" stroke-width="3.2" stroke-linecap="round"/><path d="M13.6 14.2L16.6 18M7.4 14.2L4.4 18" stroke="#f2f2f2" stroke-width="1.2" stroke-linecap="round"/></svg>
<svg style="left:275px;top:105px" width="21" height="21" viewBox="0 0 21 21"><path d="M1.4 1.4H9.6L12.6 4.4V15.6H1.4Z" fill="#eeeeee" stroke="#d9d9d9" stroke-width="1"/><path d="M7 5.6H15.6L19.6 9.6V19.6H7Z" fill="#ececec" stroke="#d3d3d3" stroke-width="1.1"/><path d="M15.6 5.6V9.6H19.6" fill="none" stroke="#d3d3d3" stroke-width="1"/></svg>
<svg style="left:275px;top:135px" width="22" height="21" viewBox="0 0 22 21"><rect x="1.2" y="1.2" width="9.4" height="12" rx="1" fill="#f2f2f2" stroke="#474d58" stroke-width="1.6"/><rect x="3.2" y="3.4" width="5.4" height="2.6" fill="#2d6fc0"/><path d="M3.2 8.4H8.6M3.2 10.6H8.6" stroke="#474d58" stroke-width="0.9"/>
<path d="M20.6 2.4L14.6 9.6L12.2 12.6L14.6 14.2L17 11.2Z" fill="#e6e6ea" stroke="#474d58" stroke-width="1"/><path d="M20.6 2.4L18.2 5.2L19.8 6.4L20.8 4.6Z" fill="#c9962c"/>
<path d="M12.2 12.4Q8.6 13 7.8 16.4Q6.4 19 1.2 19.6Q8 21.2 11.6 18.4Q14.6 16.4 14.6 14.2Z" fill="#5e6570" stroke="#474d58" stroke-width="0.8"/></svg>
<svg style="left:310px;top:91px" width="22" height="22" viewBox="0 0 22 22"><rect x="7.6" y="1.6" width="12.8" height="12.8" rx="1" fill="#a9d6ee" stroke="#2b7fd6" stroke-width="1.8"/>
<circle cx="7.8" cy="13.4" r="6.2" fill="#fbfbfb" stroke="#474d58" stroke-width="1.7"/><path d="M7.6 7.2A6.2 6.2 0 0 1 13.9 12.4" fill="none" stroke="#f25555" stroke-width="1.9"/></svg>
<svg style="left:411.5px;top:100px" width="6" height="3.6" viewBox="0 0 6 3.6"><path d="M0 0H6L3.0 3.6Z" fill="#222"/></svg>
<svg style="left:310px;top:120px" width="22" height="22" viewBox="0 0 22 22"><rect x="7.6" y="1.6" width="12.8" height="12.8" rx="1" fill="#a9d6ee" stroke="#2b7fd6" stroke-width="1.8"/>
<circle cx="7.8" cy="13.4" r="6.2" fill="#a9d6ee" stroke="#2b7fd6" stroke-width="1.8"/><path d="M8.6 8.2H13.4V13" fill="none" stroke="#94c8e6" stroke-width="1.4"/><path d="M9 9H13V14.2A6 6 0 0 0 9 9Z" fill="#a9d6ee"/></svg>
<svg style="left:419px;top:128.8px" width="6" height="3.6" viewBox="0 0 6 3.6"><path d="M0 0H6L3.0 3.6Z" fill="#222"/></svg>
<svg style="left:436px;top:89px" width="20" height="22" viewBox="0 0 20 22"><path d="M1.6 4.6L6.4 1.6L12.8 5.4L17.8 3.2V16.2L12.8 20.4L1.6 14.8Z" fill="#eef0f3" stroke="#474d58" stroke-width="1.5" stroke-linejoin="round"/><path d="M12.8 5.4V20.4" stroke="#474d58" stroke-width="1.1"/>
<path d="M3.6 8.2L10.6 11V16L3.6 13Z" fill="#2b7fd6"/><path d="M5.2 10.6L9.2 12.2V14L5.2 12.4Z" fill="#a9d6ee"/></svg>
<svg style="left:435px;top:119px" width="22" height="22" viewBox="0 0 22 22"><circle cx="6.2" cy="6" r="4.8" fill="#f2f2f2" stroke="#474d58" stroke-width="1.3"/><path d="M3.6 3.4L8.8 8.6M8.8 3.4L3.6 8.6" stroke="#474d58" stroke-width="1"/>
<path d="M10.8 11.6H18.6L20.6 9.8V17.6L18.6 19.6H10.8Z" fill="url(#gW)" stroke="#474d58" stroke-width="1.5" stroke-linejoin="round"/><path d="M10.8 11.6L12.8 9.8H20.6" fill="none" stroke="#474d58" stroke-width="1.2"/>
<path d="M1.8 12.6V16.2Q1.8 17.8 3.6 17.8H6" fill="none" stroke="#222" stroke-width="1.4"/><path d="M5 15.6L8 17.8L5 20Z" fill="#222"/></svg>
<svg style="left:465.2px;top:127.8px" width="6" height="3.6" viewBox="0 0 6 3.6"><path d="M0 0H6L3.0 3.6Z" fill="#222"/></svg>
<svg style="left:466px;top:128px" width="0.01" height="0.01" viewBox="0 0 0.01 0.01"><path d="M0 0H0.01L0.005 0.01Z" fill="#222"/></svg>
<svg style="left:486px;top:74px" width="38" height="39" viewBox="0 0 38 39"><path d="M2.4 1V38" stroke="#474d58" stroke-width="2"/><rect x="4.6" y="4.6" width="13.6" height="12.6" rx="1.6" fill="#b9dced" stroke="#2b7fd6" stroke-width="1.7"/>
<rect x="4.6" y="20.4" width="31.4" height="14.6" rx="1.4" fill="url(#gW)" stroke="#474d58" stroke-width="1.8"/></svg>
<svg style="left:533px;top:76px" width="39" height="33" viewBox="0 0 39 33"><path d="M37.6 15.4H23.4V9.4Q23.4 2.4 16.4 2.4Q9.4 2.4 9.4 9.4V15.4H7.4Q2 15.4 2 22.2Q2 30.6 9 30.6H37.6" fill="none" stroke="#2b7fd6" stroke-width="1.7"/>
<path d="M37.6 19.4H19.4V10Q19.4 6.4 16.4 6.4Q13.4 6.4 13.4 10V19.4H8Q6 19.4 6 22.6Q6 26.6 9.4 26.6H37.6" fill="none" stroke="#555b66" stroke-width="1.7"/>
<path d="M37.6 17.4H21.4V9.6Q21.4 4.4 16.4 4.4Q11.4 4.4 11.4 9.6V17.4H7.6Q4 17.4 4 22.4Q4 28.6 9.2 28.6H37.6" fill="none" stroke="#d7ebf6" stroke-width="2"/></svg>
<svg style="left:487px;top:117px" width="38" height="38" viewBox="0 0 38 38"><path d="M19 1L26 9.6H21.8V15.4H16.2V9.6H12ZM19 37L26 28.4H21.8V22.6H16.2V28.4H12ZM1 19L9.6 12V16.2H15.4V21.8H9.6V26ZM37 19L28.4 12V16.2H22.6V21.8H28.4V26Z" fill="#474d58"/>
<rect x="16.4" y="16.4" width="5.2" height="5.2" fill="#fff" stroke="#474d58" stroke-width="1.2"/></svg>
<svg style="left:535px;top:117px" width="36" height="37" viewBox="0 0 36 37"><circle cx="9" cy="9" r="7.2" fill="url(#gW2)" stroke="#555b66" stroke-width="1.5"/>
<path d="M18.6 5.4H25Q29.6 5.4 29.6 10V12" fill="none" stroke="#222" stroke-width="1.7"/><path d="M26.4 11.4H32.8L29.6 15.4Z" fill="#222"/>
<circle cx="26.4" cy="28.6" r="6.6" fill="#d5e9f3" stroke="#2b7fd6" stroke-width="1.6"/><circle cx="22" cy="24.4" r="6.6" fill="#b9dced" stroke="#2b7fd6" stroke-width="1.7"/></svg>
<svg style="left:582px;top:74px" width="36" height="39" viewBox="0 0 36 39"><path d="M2 4.2Q2 2.6 3.6 2.6H6L12.2 9V19.4Q12.2 20.6 11 20.6H8.6V29.6Q8.6 31.2 7 31.2H3.6Q2 31.2 2 29.6Z" transform="translate(0,2)" fill="url(#gW)" stroke="#474d58" stroke-width="1.6"/><path d="M33 4.2Q33 2.6 31.4 2.6H29L22.8 9V31.2H31.4Q33 31.2 33 29.6Z" transform="translate(1,2)" fill="#cfe5f3" stroke="#a9cfe8" stroke-width="1.2"/>
<path d="M18.2 1V14.6" stroke="#3aa03a" stroke-width="2.2"/><path d="M18.2 34.4V36.6" stroke="#3aa03a" stroke-width="2.2"/>
<path d="M18.4 17.2V33.4L21.8 30.2L24 35.4L26.4 34.4L24.2 29.4H28.8Z" fill="#f6f6f6" stroke="#6a6a6a" stroke-width="1.1" stroke-linejoin="round"/></svg>
<svg style="left:629px;top:74px" width="38" height="39" viewBox="0 0 38 39"><path d="M2 4.2Q2 2.6 3.6 2.6H6L12.2 9V19.4Q12.2 20.6 11 20.6H8.6V29.6Q8.6 31.2 7 31.2H3.6Q2 31.2 2 29.6Z" transform="translate(0,2)" fill="url(#gW)" stroke="#474d58" stroke-width="1.6"/><path d="M33 4.2Q33 2.6 31.4 2.6H29L22.8 9V31.2H31.4Q33 31.2 33 29.6Z" transform="translate(1,2)" fill="#cfe5f3" stroke="#a9cfe8" stroke-width="1.2"/>
<path d="M18.4 1V30" stroke="#3b8fe6" stroke-width="2.2"/>
<path d="M18.4 36.4L20 31L32 19.4L35.6 22.8L23.8 34.6Z" fill="#f7c52e" stroke="#b07a10" stroke-width="0.9" stroke-linejoin="round"/><path d="M18.4 36.4L20 31L23.8 34.6Z" fill="#fbfbfb" stroke="#888" stroke-width="0.7"/><path d="M30 21.4L33.6 24.8L35.6 22.8L32 19.4Z" fill="#b8622a"/><path d="M21.6 30.4L31 21.4" stroke="#fff0a8" stroke-width="1"/></svg>
<svg style="left:584px;top:117px" width="35" height="38" viewBox="0 0 35 38"><path d="M25.4 10.6A14 14 0 1 1 12.4 9.2" fill="none" stroke="#474d58" stroke-width="2.4"/><path d="M10.8 2.2L21.2 6.2L12.4 12.6Z" fill="#474d58"/></svg>
<svg style="left:629px;top:117px" width="38" height="38" viewBox="0 0 38 38"><path d="M8.6 4.4H23" stroke="#474d58" stroke-width="1.5"/><path d="M21.6 1.2L26 4.4L21.6 7.6Z" fill="#474d58"/>
<path d="M1.4 9.4H16M1.4 13.4H16" stroke="#5c626d" stroke-width="1.6"/><path d="M24.6 24V36.4M28.4 24V36.4" stroke="#5c626d" stroke-width="1.6"/>
<path d="M16 8.6H29.2V24H23.8V14.2H16Z" fill="#5fb0f2"/><path d="M16 11.4H26.5V24" fill="none" stroke="#bfe0fa" stroke-width="1.2"/>
<path d="M33 29.6V15" stroke="#474d58" stroke-width="1.5"/><path d="M29.8 16.4L33 12L36.2 16.4Z" fill="#474d58"/></svg>
<svg style="left:678px;top:78px" width="21" height="16" viewBox="0 0 21 16"><rect x="1.4" y="5.2" width="17.6" height="5.6" rx="2.6" fill="#a9d6ee" stroke="#2b7fd6" stroke-width="1.7"/><rect x="8" y="6.4" width="4.4" height="3.2" fill="#eee"/>
<path d="M10.2 1.2V14.8" stroke="#e8504f" stroke-width="1.1" stroke-dasharray="1.6 1.2"/><path d="M8.8 2.8L10.2 1L11.6 2.8M8.8 13.2L10.2 15L11.6 13.2" fill="none" stroke="#e8504f" stroke-width="0.8"/></svg>
<svg style="left:708px;top:78px" width="22" height="16" viewBox="0 0 22 16"><rect x="1.4" y="5" width="6" height="6" rx="1.2" fill="#a9d6ee" stroke="#2b7fd6" stroke-width="1.7"/><rect x="13.4" y="5" width="6" height="6" rx="1.2" fill="#a9d6ee" stroke="#2b7fd6" stroke-width="1.7"/>
<path d="M10.4 1.2V14.8" stroke="#e8504f" stroke-width="1.1" stroke-dasharray="1.6 1.2"/><path d="M9 2.8L10.4 1L11.8 2.8M9 13.2L10.4 15L11.8 13.2" fill="none" stroke="#e8504f" stroke-width="0.8"/></svg>
<svg style="left:738px;top:75px" width="22" height="21" viewBox="0 0 22 21"><path d="M0.6 7H5.2M5.2 2.2V11.8M5.2 3.4H8.4Q8.8 5.6 13.2 2V12Q8.8 8.4 8.4 10.6H5.2" fill="none" stroke="#555b66" stroke-width="1.1"/><path d="M8.4 3.4V10.6M13.2 2V12" stroke="#555b66" stroke-width="1.2"/><path d="M12.4 11.6L19.6 18.8M19.6 11.6L12.4 18.8" stroke="#d92a2a" stroke-width="2.4"/></svg>
<svg style="left:678px;top:104px" width="22" height="22" viewBox="0 0 22 22"><rect x="1.6" y="1.6" width="7" height="7" rx="0.8" fill="#fafafa" stroke="#474d58" stroke-width="1.5"/><path d="M2.6 5.1H7.6M5.1 2.6V7.6" stroke="#dcdcdc" stroke-width="0.8"/><rect x="12.4" y="1.6" width="7" height="7" rx="0.8" fill="#cfe6f2" stroke="#2b7fd6" stroke-width="1.6"/><path d="M13.4 5.1H18.4M15.9 2.6V7.6" stroke="#a9d2ea" stroke-width="0.8"/><rect x="1.6" y="12.4" width="7" height="7" rx="0.8" fill="#cfe6f2" stroke="#2b7fd6" stroke-width="1.6"/><path d="M2.6 15.9H7.6M5.1 13.4V18.4" stroke="#a9d2ea" stroke-width="0.8"/><rect x="12.4" y="12.4" width="7" height="7" rx="0.8" fill="#cfe6f2" stroke="#2b7fd6" stroke-width="1.6"/><path d="M13.4 15.9H18.4M15.9 13.4V18.4" stroke="#a9d2ea" stroke-width="0.8"/></svg>
<svg style="left:708px;top:104px" width="22" height="22" viewBox="0 0 22 22"><rect x="1.4" y="1.4" width="18.4" height="18.4" rx="1.6" fill="#a9d6ee" stroke="#2b7fd6" stroke-width="1.8"/><rect x="1.6" y="9.6" width="9.6" height="10" rx="1" fill="url(#gW)" stroke="#474d58" stroke-width="1.7"/><path d="M0.4 9V21H12.4" fill="none" stroke="#eee" stroke-width="0"/></svg>
<svg style="left:738px;top:108px" width="19" height="15" viewBox="0 0 15 14"><path d="M0.6 7H5.2M5.2 2.2V11.8M5.2 3.4H8.4Q8.8 5.6 13.2 2V12Q8.8 8.4 8.4 10.6H5.2" fill="none" stroke="#555b66" stroke-width="1.1"/><path d="M8.4 3.4V10.6M13.2 2V12" stroke="#555b66" stroke-width="1.2"/></svg>
<svg style="left:679px;top:135px" width="21" height="21" viewBox="0 0 21 21"><path d="M16 1V19.6M18.8 1V19.6" stroke="#5c626d" stroke-width="1.6"/><path d="M3.6 4.4H11" stroke="#222" stroke-width="1.4"/><path d="M9.6 1.4L13.6 4.4L9.6 7.4Z" fill="#222"/>
<path d="M0.8 9.6H8M0.8 11.4H8M0.8 13.2H8" stroke="#5c626d" stroke-width="1"/><rect x="8" y="9" width="8" height="4.8" fill="#5fb0f2"/></svg>
<svg style="left:709px;top:135px" width="21" height="21" viewBox="0 0 21 21"><path d="M16 1V19.6M18.8 1V19.6" stroke="#5c626d" stroke-width="1.6"/><path d="M3.6 3.4H11" stroke="#222" stroke-width="1.4"/><path d="M9.6 0.6L13.6 3.4L9.6 6.2Z" fill="#222"/>
<path d="M0.8 8H8M0.8 9.6H8M0.8 11.2H8M0.8 14H8M0.8 15.6H8M0.8 17.2H8" stroke="#5c626d" stroke-width="0.9"/><rect x="8" y="7.6" width="8" height="4" fill="#5fb0f2"/><rect x="8" y="13.6" width="8" height="4" fill="#5fb0f2"/></svg>
<svg style="left:740px;top:136px" width="19" height="19" viewBox="0 0 19 19"><path d="M3.6 3.6L15 15M15 3.6L3.6 15" stroke="#c02626" stroke-width="4.2" stroke-linecap="round"/><path d="M3.6 3.6L15 15M15 3.6L3.6 15" stroke="#ef4a4a" stroke-width="2.8" stroke-linecap="round"/></svg>
<svg style="left:780px;top:81px" width="37" height="23" viewBox="0 0 37 23"><path d="M3 6H33" stroke="#c6c8cc" stroke-width="1.5"/><path d="M1 6L6.4 2V10ZM35.6 6L30.2 2V10Z" fill="#c6c8cc"/>
<rect x="1" y="14.6" width="34.6" height="6.6" rx="0.8" fill="#f3e2ae" stroke="#ecd596" stroke-width="0.8"/><path d="M4 15V18M7 15V17M10 15V18M13 15V17M16 15V18M19 15V17M22 15V18M25 15V17M28 15V18M31 15V17" stroke="#e2c878" stroke-width="0.7"/></svg>
<svg style="left:826.5px;top:91.2px" width="6.4" height="3.8" viewBox="0 0 6.4 3.8"><path d="M0 0H6.4L3.2 3.8Z" fill="#222"/></svg>
<svg style="left:780px;top:116px" width="38" height="38" viewBox="0 0 38 38"><path d="M7 32.6L30.6 9" stroke="#474d58" stroke-width="1.7"/><path d="M1.4 26L12.4 37M25.6 1.6L36.6 12.6" stroke="#474d58" stroke-width="1.7"/>
<path d="M5.4 34.2L7.4 25.8L13.8 32.2ZM32.2 7.4L30.2 15.8L23.8 9.4Z" fill="#474d58"/></svg>
<svg style="left:826.5px;top:134.6px" width="6.4" height="3.8" viewBox="0 0 6.4 3.8"><path d="M0 0H6.4L3.2 3.8Z" fill="#222"/></svg>
<svg style="left:864px;top:73px" width="40" height="39" viewBox="0 0 40 39"><path d="M7.4 2.4H2.6V36H7.4M31 36H35.8V13" fill="none" stroke="#474d58" stroke-width="1.8"/>
<circle cx="16.6" cy="14.6" r="9.4" fill="url(#gW2)" stroke="#474d58" stroke-width="1.7"/>
<path d="M15 20L20 15H32.6V27.6L27.6 32.6H15Z" fill="url(#gW)" stroke="#474d58" stroke-width="1.8" stroke-linejoin="round"/><path d="M15 20H27.6V32.6M27.6 20L32.6 15" fill="none" stroke="#474d58" stroke-width="1.3"/>
<path d="M33 1L34.4 5.4L38.6 3.6L36.4 7.6L40 9.6L35.8 10.4L36.4 14.8L33 12L29.6 14.8L30.2 10.4L26 9.6L29.6 7.6L27.4 3.6L31.6 5.4Z" fill="#f2a21a" stroke="#e0451c" stroke-width="0.9"/><circle cx="33" cy="8.4" r="2.4" fill="#fff7c8"/></svg>
<svg style="left:864px;top:116px" width="39" height="38" viewBox="0 0 39 38"><rect x="1.6" y="1.6" width="8.2" height="8.2" rx="0.8" fill="#f0f0f0" stroke="#c9c9c9" stroke-width="1.2"/><rect x="27.6" y="1.6" width="8.6" height="8.2" rx="0.8" fill="#d9e8f2" stroke="#b7d3e8" stroke-width="1.2"/>
<path d="M12.4 5.6H22" stroke="#c2c2c2" stroke-width="1.4"/><path d="M20.6 2.6L25 5.6L20.6 8.6Z" fill="#c2c2c2"/><path d="M5.6 12.6V21" stroke="#c2c2c2" stroke-width="1.4"/><path d="M2.6 19.6L5.6 24L8.6 19.6Z" fill="#c2c2c2"/>
<path d="M13 13L20.4 20.4" stroke="#c2c2c2" stroke-width="1.4"/><path d="M22.6 17.2V22.6H17.2Z" fill="#c2c2c2"/>
<rect x="1.6" y="27.6" width="13.4" height="8.4" rx="0.8" fill="#d9e8f2" stroke="#b7d3e8" stroke-width="1.3"/><path d="M29.4 21.6L35.4 27.6L29.4 33.6L23.4 27.6Z" fill="#dfecf4" stroke="#b7d3e8" stroke-width="1.3"/></svg>
<svg style="left:952px;top:76px" width="38" height="37" viewBox="0 0 38 37"><path d="M19.4 2.8H28.2Q29.6 2.8 29.6 4.2V31.4Q29.6 32.8 28.2 32.8H2.6Q1.2 32.8 1.2 31.4V24.2Q1.2 22.8 2.6 22.8H19.4Z" fill="url(#gW)" stroke="#474d58" stroke-width="1.8" stroke-linejoin="round"/>
<path d="M2 24H19.6V31.8H2Z" fill="#fdfdfd"/>
<rect x="2.4" y="6.6" width="13.6" height="12.4" fill="url(#gW)"/><path d="M2 5V18.2Q2 19.6 3.4 19.6H16.6V5" fill="none" stroke="#474d58" stroke-width="1.6"/><path d="M2 3.6V6M16.6 3.6V6" stroke="#474d58" stroke-width="1.4" stroke-dasharray="1.2 1.2"/>
<path d="M9.4 0.4L16.4 7.6H12.4V14H6.4V7.6H2.4Z" fill="url(#gLB)" stroke="#1a64c0" stroke-width="1"/></svg>
<svg style="left:1053px;top:76px" width="38" height="37" viewBox="0 0 38 37"><path d="M19.4 2.8H28.2Q29.6 2.8 29.6 4.2V31.4Q29.6 32.8 28.2 32.8H2.6Q1.2 32.8 1.2 31.4V24.2Q1.2 22.8 2.6 22.8H19.4Z" fill="url(#gW)" stroke="#474d58" stroke-width="1.8" stroke-linejoin="round"/>
<path d="M2 24H19.6V31.8H2Z" fill="#fdfdfd"/>
<rect x="2.4" y="6.6" width="13.6" height="12.4" fill="url(#gW)"/><path d="M2 5V18.2Q2 19.6 3.4 19.6H16.6V5" fill="none" stroke="#474d58" stroke-width="1.6"/><path d="M2 3.6V6M16.6 3.6V6" stroke="#474d58" stroke-width="1.4" stroke-dasharray="1.2 1.2"/>
<path d="M9.4 0.4L16.4 7.6H12.4V14H6.4V7.6H2.4Z" fill="url(#gLB)" stroke="#1a64c0" stroke-width="1"/><rect x="21.4" y="20.6" width="14.4" height="14.4" rx="2.2" fill="url(#gRed)" stroke="#a51212" stroke-width="1"/><path d="M24.8 24L32.4 31.6M32.4 24L24.8 31.6" stroke="#fff" stroke-width="1.9"/></svg>
<svg style="left:1229px;top:50px" width="19" height="13" viewBox="0 0 19 13"><rect x="1.2" y="1.2" width="16.6" height="10.6" rx="2.6" fill="#f4f4f4" stroke="#333" stroke-width="1.5"/><path d="M6 8.4H13L9.5 4.6Z" fill="#222"/></svg>
<svg style="left:1254.5px;top:55px" width="5.6" height="3.4" viewBox="0 0 5.6 3.4"><path d="M0 0H5.6L2.8 3.4Z" fill="#222"/></svg>
<svg style="left:1388px;top:19px" width="7" height="10" viewBox="0 0 7 10"><path d="M6.2 0.6V9.4L1 5Z" fill="#222"/></svg>
<svg style="left:1403px;top:15px" width="22" height="19" viewBox="0 0 22 19"><path d="M3.4 6.2L4.6 2.2H8L9.2 6.2V16.8H1.6V10Z" fill="#f2f3f5" stroke="#2e333c" stroke-width="1.5" stroke-linejoin="round"/><path d="M17.6 6.2L16.4 2.2H13L11.8 6.2V16.8H19.4V10Z" fill="#f2f3f5" stroke="#2e333c" stroke-width="1.5" stroke-linejoin="round"/>
<rect x="8.8" y="6" width="3.4" height="5" fill="#2e333c"/><path d="M4.4 1.6H8.2M12.8 1.6H16.6" stroke="#2e333c" stroke-width="1.6"/><path d="M2.4 11H8.6M12.4 11H18.6" stroke="#2e333c" stroke-width="1"/></svg>
<svg style="left:1432px;top:14px" width="22" height="20" viewBox="0 0 22 20"><path d="M1.2 19Q1.4 14.4 7.2 13.2Q8.4 12.6 7.8 11Q5.6 8.6 6 5.2Q6.6 1 11 1Q15.4 1 16 5.2Q16.4 8.6 14.2 11Q13.6 12.6 14.8 13.2Q20.6 14.4 20.8 19Z" fill="#4d83e8" stroke="#1c3c86" stroke-width="1.3" stroke-linejoin="round"/><path d="M8.4 4.4Q11 2.2 13.6 4.4" stroke="#8db4f6" stroke-width="1.2" fill="none"/></svg>
<svg style="left:1561.4px;top:22px" width="5.8" height="3.4" viewBox="0 0 5.8 3.4"><path d="M0 0H5.8L2.9 3.4Z" fill="#222"/></svg>
<svg style="left:1579px;top:15px" width="21" height="18" viewBox="0 0 21 18"><path d="M1 1.6H4L7.2 11.6H16.4L19.2 4.4H5.2" fill="#e8ecf6" stroke="#3b4aa0" stroke-width="1.5" stroke-linejoin="round"/><path d="M7.2 11.6L6 14H17" fill="none" stroke="#3b4aa0" stroke-width="1.3"/>
<circle cx="7.6" cy="15.8" r="1.5" fill="#fff" stroke="#3b4aa0" stroke-width="1.1"/><circle cx="15.4" cy="15.8" r="1.5" fill="#fff" stroke="#3b4aa0" stroke-width="1.1"/></svg>
<svg style="left:1620px;top:13px" width="22" height="22" viewBox="0 0 22 22"><circle cx="11" cy="11" r="9.4" fill="#fbfbfb" stroke="#333" stroke-width="1.5"/><text x="7.1" y="16.4" font-family="Liberation Sans, sans-serif" font-weight="700" font-size="15" fill="#2044b8">?</text></svg>
<svg style="left:1650.8px;top:22px" width="5.8" height="3.4" viewBox="0 0 5.8 3.4"><path d="M0 0H5.8L2.9 3.4Z" fill="#222"/></svg>
<svg style="left:1735px;top:27px" width="11" height="4" viewBox="0 0 11 4"><rect x="0.8" y="0.8" width="9.6" height="2.6" fill="#1a1a1a"/></svg>
<svg style="left:1763px;top:17px" width="16" height="14" viewBox="0 0 16 14"><rect x="0.9" y="1.6" width="13.6" height="11.4" fill="none" stroke="#2a2a2a" stroke-width="1.4"/><rect x="0.4" y="0.4" width="14.6" height="2.6" fill="#2a2a2a"/></svg>
<svg style="left:1794px;top:18px" width="14" height="13" viewBox="0 0 14 13"><path d="M0.8 0.8L13 12.2M13 0.8L0.8 12.2" stroke="#1f1f1f" stroke-width="2"/></svg>
<svg style="left:349px;top:224px" width="12" height="12" viewBox="0 0 12 12"><path d="M0.6 0.6L11.4 11.4M11.4 0.6L0.6 11.4" stroke="#1f1f1f" stroke-width="1.6"/></svg>
<svg style="left:28px;top:248px" width="50" height="62" viewBox="0 0 50 62"><defs><linearGradient id="gRg" x1="0" y1="0" x2="1" y2="1"><stop offset="0" stop-color="#a6a6a6"/><stop offset="0.5" stop-color="#9a9a9a"/><stop offset="1" stop-color="#c4c4c4"/></linearGradient></defs><text x="2" y="56" font-family="Liberation Sans, sans-serif" font-weight="700" font-size="71" fill="url(#gRg)" textLength="43" lengthAdjust="spacingAndGlyphs">R</text></svg>
<svg style="left:352px;top:283px" width="8.6" height="4.6" viewBox="0 0 8.6 4.6"><path d="M0 0H8.6L4.3 4.6Z" fill="#8e8e8e"/></svg>
<svg style="left:222px;top:338px" width="11" height="7" viewBox="0 0 11 7"><path d="M0.8 0.8L5.4 5.4L10 0.8" fill="none" stroke="#444" stroke-width="1.3"/></svg>
<svg style="left:242px;top:330px" width="18" height="17" viewBox="0 0 18 17"><path d="M1.4 2.4Q1.4 1.2 2.6 1.2H7V7H1.4ZM1.4 9.4H7V14.6H2.6Q1.4 14.6 1.4 13.4ZM9.4 1.2H14.4Q15.6 1.2 15.6 2.4V5" fill="#f2f2f2" stroke="#b9b9b9" stroke-width="1.1"/>
<rect x="9.2" y="6.4" width="7.6" height="9.6" rx="0.8" fill="#f4f4f4" stroke="#b3b3b3" stroke-width="1.1"/><path d="M10.8 8.8H15.2M10.8 11.2H15.2M10.8 13.4H15.2" stroke="#b9b9b9" stroke-width="0.9"/></svg>
<svg style="left:352px;top:359.2px" width="7" height="9" viewBox="0 0 7 9"><path d="M0.8 3.6L3.4 1L6 3.6M0.8 7.8L3.4 5.2L6 7.8" fill="none" stroke="#111" stroke-width="1.3"/></svg>
<svg style="left:352px;top:405.6px" width="7" height="9" viewBox="0 0 7 9"><path d="M0.8 3.6L3.4 1L6 3.6M0.8 7.8L3.4 5.2L6 7.8" fill="none" stroke="#111" stroke-width="1.3"/></svg>
<svg style="left:352px;top:474.6px" width="7" height="9" viewBox="0 0 7 9"><path d="M0.8 3.6L3.4 1L6 3.6M0.8 7.8L3.4 5.2L6 7.8" fill="none" stroke="#111" stroke-width="1.3"/></svg>
<svg style="left:189.6px;top:519.4px" width="15" height="15" viewBox="0 0 15 15"><path d="M2.6 7.2L5.8 10.4L11.6 3.6" fill="none" stroke="#444" stroke-width="1.3"/></svg>
<svg style="left:189.6px;top:588.4px" width="15" height="15" viewBox="0 0 15 15"><path d="M2.6 7.2L5.8 10.4L11.6 3.6" fill="none" stroke="#444" stroke-width="1.3"/></svg>
<svg style="left:375px;top:221px" width="19" height="17" viewBox="0 0 20 19"><path d="M1.7 8.6L5.9 2.8L9.6 10.2L8.5 18.4L1.7 14.6Z" fill="url(#gW)" stroke="#4a5362" stroke-width="1.3" stroke-linejoin="round"/>
<path d="M9.4 10.4L17.6 7.8V14.2L8.5 18.4Z" fill="#aab4c1" stroke="#4a5362" stroke-width="1.3" stroke-linejoin="round"/>
<path d="M5.9 2.6L13.6 1.3L18.7 7.4L9.9 10.3Z" fill="#eff1f5" stroke="#4a5362" stroke-width="1.4" stroke-linejoin="round"/>
<path d="M0.7 8.4L5.9 2.6L9.9 10.3" fill="none" stroke="#4a5362" stroke-width="1.9" stroke-linejoin="round" stroke-linecap="round"/>
<path d="M4 15.6V11.4Q4 9.6 5.3 9.8Q6.5 10 6.5 12V17Z" fill="#2f3540"/></svg>
<svg style="left:505px;top:224px" width="12" height="12" viewBox="0 0 12 12"><path d="M0.6 0.6L11.4 11.4M11.4 0.6L0.6 11.4" stroke="#1f1f1f" stroke-width="1.6"/></svg>
<svg style="left:529px;top:223px" width="19" height="15" viewBox="0 0 19 15"><path d="M1 1.6H9.6V13.4H1Z" fill="#f3e9ea" stroke="#cfc6c7" stroke-width="1"/><path d="M7.4 4.6H12.4L14 1.2H17.8V14H7.4Z" fill="#f6eeee" stroke="#c9c0c1" stroke-width="1"/><path d="M7.4 8V10M7.4 11.4V13" stroke="#cfc6c7" stroke-width="0.8"/></svg>
<svg style="left:1302px;top:226px" width="11" height="9" viewBox="0 0 11 9"><path d="M0.6 1.2H10" stroke="#333" stroke-width="1.5"/><path d="M0.6 4H10L5.3 8.4Z" fill="#333"/></svg>
<svg style="left:1301px;top:250px" width="11" height="8" viewBox="0 0 11 8"><path d="M1 6.4L5.4 1.6L9.8 6.4" fill="none" stroke="#333" stroke-width="1.6"/></svg>
<svg style="left:1301px;top:910px" width="11" height="8" viewBox="0 0 11 8"><path d="M1 1.4L5.4 6.2L9.8 1.4" fill="none" stroke="#333" stroke-width="1.6"/></svg>
<svg style="left:1282px;top:930px" width="8" height="10" viewBox="0 0 8 10"><path d="M1.4 0.8L6.2 5L1.4 9.2" fill="none" stroke="#333" stroke-width="1.6"/></svg>
<svg style="left:655px;top:929px" width="8" height="11" viewBox="0 0 8 11"><path d="M6.4 0.8L1.4 5.4L6.4 10" fill="none" stroke="#222" stroke-width="1.5"/></svg>
<svg style="left:1302px;top:931px" width="12" height="12" viewBox="0 0 12 12"><path d="M9 1h2v2h-2zM6 4h2v2h-2zM9 4h2v2h-2zM3 7h2v2h-2zM6 7h2v2h-2zM9 7h2v2h-2z" fill="#bdbdbd" transform="translate(0,1.4)"/></svg>
<svg style="left:1185px;top:262px" width="110" height="95" viewBox="1185 262 110 95">
<defs><radialGradient id="gSh" cx="0.5" cy="0.5" r="0.5"><stop offset="0" stop-color="#b0b0b0" stop-opacity="0.8"/><stop offset="0.6" stop-color="#cfcfcf" stop-opacity="0.45"/><stop offset="1" stop-color="#ffffff" stop-opacity="0"/></radialGradient>
<linearGradient id="gCf" x1="0" y1="0" x2="0.3" y2="1"><stop offset="0" stop-color="#f0f0f0"/><stop offset="1" stop-color="#dcdcdc"/></linearGradient></defs>
<ellipse cx="1240" cy="336" rx="50" ry="14" fill="url(#gSh)"/>
<path d="M1204.7 282.9L1229.4 271.5L1268.9 277L1250.6 290.7Z" fill="#f3f3f3" stroke="#b4b4b4" stroke-width="0.9" stroke-linejoin="round"/>
<path d="M1250.6 290.7L1268.9 277L1266.6 318.7L1249.6 338Z" fill="#e2e2e2" stroke="#b4b4b4" stroke-width="0.9" stroke-linejoin="round"/>
<path d="M1204.7 282.9L1250.6 290.7L1249.6 338L1206.5 325.1Z" fill="url(#gCf)" stroke="#b0b0b0" stroke-width="0.9" stroke-linejoin="round"/>
<text transform="matrix(1 0.2 -0.02 1.12 1207.6 311.2)" font-family="Liberation Sans, sans-serif" font-size="15" fill="#9ba1a9" textLength="41" lengthAdjust="spacingAndGlyphs">Спереди</text>
<text transform="matrix(0.66 -0.66 0.02 1.25 1252.2 316.6)" font-family="Liberation Sans, sans-serif" font-size="11" fill="#a4a9b0" textLength="23" lengthAdjust="spacingAndGlyphs">Справа</text>
<text transform="matrix(-0.95 -0.18 0.9 -0.45 1254.5 283.2)" font-family="Liberation Sans, sans-serif" font-size="10" fill="#adb1b7" textLength="37" lengthAdjust="spacingAndGlyphs">Сверху</text>
</svg>
<svg style="left:1260px;top:358px" width="38" height="117" viewBox="1260 358 38 117">
<rect x="1262.5" y="360.5" width="32" height="111.5" rx="4" fill="#f6f6f6" stroke="#b9b9b9" stroke-width="1.2"/>
<circle cx="1288.6" cy="366.6" r="2.7" fill="#eee" stroke="#b4b4b4" stroke-width="0.9"/><path d="M1287.2 365.2l2.8 2.8m0-2.8l-2.8 2.8" stroke="#b4b4b4" stroke-width="0.7"/>
<circle cx="1288.6" cy="465.6" r="2.7" fill="#eee" stroke="#b4b4b4" stroke-width="0.9"/><circle cx="1288.6" cy="465.6" r="1" fill="#c9c9c9"/>
<path d="M1268 389.6A9 9 0 1 1 1285.6 391.2" fill="#f0f0f0" stroke="#bdbdbd" stroke-width="1.4"/><circle cx="1276.6" cy="388.6" r="9" fill="#f4f4f4" stroke="#bcbcbc" stroke-width="1.4"/><circle cx="1276.6" cy="388.6" r="3.8" fill="#fafafa" stroke="#bcbcbc" stroke-width="1.2"/>
<path d="M1281.6 393.4L1284 391.4H1290.6V398L1288.4 400.2H1281.6Z" fill="#9cc8ee" stroke="#6fa6d8" stroke-width="0.9"/><path d="M1281.6 393.4H1288.4V400.2M1288.4 393.4L1290.6 391.4" fill="none" stroke="#d6eafa" stroke-width="0.8"/>
<path d="M1276.4 408.8h5.2l-2.6 3z" fill="#8a8a8a"/>
<path d="M1265.6 416.2H1291.6" stroke="#c9c9c9" stroke-width="1"/>
<rect x="1269.4" y="424.2" width="9.6" height="10.4" fill="#9ccf94" stroke="#8bbf84" stroke-width="0.6"/><circle cx="1281.6" cy="433.4" r="3.2" fill="#f3f3f3" stroke="#9a9a9a" stroke-width="1.2"/><path d="M1283.8 435.8L1286.6 439" stroke="#9a9a9a" stroke-width="1.5"/>
<path d="M1276.4 450.2h5.2l-2.6 3z" fill="#8a8a8a"/>
</svg>
<svg style="left:459.4px;top:925px" width="20" height="16" viewBox="0 0 20 16"><rect x="0.9" y="0.9" width="18" height="14.2" rx="1.2" fill="#5a616d" stroke="#4a505b" stroke-width="1.4"/><rect x="2.4" y="2.4" width="1.7" height="1.5" fill="#fff"/><rect x="5.6" y="2.4" width="1.7" height="1.5" fill="#fff"/><rect x="8.8" y="2.4" width="1.7" height="1.5" fill="#fff"/><rect x="12.0" y="2.4" width="1.7" height="1.5" fill="#fff"/><rect x="15.2" y="2.4" width="1.7" height="1.5" fill="#fff"/><rect x="4.0" y="4.7" width="1.7" height="1.5" fill="#fff"/><rect x="7.2" y="4.7" width="1.7" height="1.5" fill="#fff"/><rect x="10.4" y="4.7" width="1.7" height="1.5" fill="#fff"/><rect x="13.6" y="4.7" width="1.7" height="1.5" fill="#fff"/><rect x="16.8" y="4.7" width="1.7" height="1.5" fill="#fff"/><rect x="2.4" y="7.0" width="1.7" height="1.5" fill="#fff"/><rect x="5.6" y="7.0" width="1.7" height="1.5" fill="#fff"/><rect x="8.8" y="7.0" width="1.7" height="1.5" fill="#fff"/><rect x="12.0" y="7.0" width="1.7" height="1.5" fill="#fff"/><rect x="15.2" y="7.0" width="1.7" height="1.5" fill="#fff"/><rect x="4.0" y="9.3" width="1.7" height="1.5" fill="#fff"/><rect x="7.2" y="9.3" width="1.7" height="1.5" fill="#fff"/><rect x="10.4" y="9.3" width="1.7" height="1.5" fill="#fff"/><rect x="13.6" y="9.3" width="1.7" height="1.5" fill="#fff"/><rect x="16.8" y="9.3" width="1.7" height="1.5" fill="#fff"/><rect x="2.4" y="11.6" width="1.7" height="1.5" fill="#fff"/><rect x="5.6" y="11.6" width="1.7" height="1.5" fill="#fff"/><rect x="8.8" y="11.6" width="1.7" height="1.5" fill="#fff"/><rect x="12.0" y="11.6" width="1.7" height="1.5" fill="#fff"/><rect x="15.2" y="11.6" width="1.7" height="1.5" fill="#fff"/></svg>
<svg style="left:483px;top:926px" width="20" height="16" viewBox="0 0 20 16"><path d="M1.2 6L5.6 1.2H18.6V9.8L14.2 14.8H1.2Z" fill="#a9d6ee" stroke="#2b7fd6" stroke-width="1.5" stroke-linejoin="round"/><path d="M1.2 6H14.2V14.8M14.2 6L18.6 1.2" fill="none" stroke="#2b7fd6" stroke-width="1.3"/></svg>
<svg style="left:506px;top:925px" width="21" height="17" viewBox="0 0 21 17"><path d="M5 2.8H14.6V7.6H9.8V15.2H5Z" fill="#8ec6f0" stroke="#2b7fd6" stroke-width="1.3" stroke-linejoin="round"/><path d="M6.4 4.2H13.2" stroke="#d4ebfb" stroke-width="1"/><path d="M0.8 11.2H5M10.2 0.8V2.8" stroke="#3a404b" stroke-width="1.6"/><rect x="0.2" y="9.6" width="2" height="3.2" fill="#3a404b"/><rect x="8.8" y="0.2" width="3" height="1.8" fill="#3a404b"/><path d="M7.6 10.4H10.6" stroke="#e24" stroke-width="1.3"/><path d="M11.2 7L17.8 13.6M17.8 7L11.2 13.6" stroke="#e02626" stroke-width="2.4"/></svg>
<svg style="left:530px;top:925px" width="21" height="17" viewBox="0 0 21 17"><path d="M5 2.8H14.6V7.6H9.8V15.2H5Z" fill="#8ec6f0" stroke="#2b7fd6" stroke-width="1.3" stroke-linejoin="round"/><path d="M6.4 4.2H13.2" stroke="#d4ebfb" stroke-width="1"/><path d="M0.8 11.2H5M10.2 0.8V2.8" stroke="#3a404b" stroke-width="1.6"/><rect x="0.2" y="9.6" width="2" height="3.2" fill="#3a404b"/><rect x="8.8" y="0.2" width="3" height="1.8" fill="#3a404b"/><path d="M7.6 10.4H10.6" stroke="#e24" stroke-width="1.3"/><path d="M12.4 9a3.6 3.6 0 1 1 4.4 0v2.2h-4.4z" fill="#fbfbfb" stroke="#4d8fe8" stroke-width="1.5"/><path d="M13.1 13.4h3" stroke="#555" stroke-width="1.2"/></svg>
<svg style="left:553px;top:924px" width="21" height="18" viewBox="0 0 21 19"><path d="M1.7 8.6L5.9 2.8L9.6 10.2L8.5 18.4L1.7 14.6Z" fill="url(#gW)" stroke="#4a5362" stroke-width="1.3" stroke-linejoin="round"/>
<path d="M9.4 10.4L17.6 7.8V14.2L8.5 18.4Z" fill="#aab4c1" stroke="#4a5362" stroke-width="1.3" stroke-linejoin="round"/>
<path d="M5.9 2.6L13.6 1.3L18.7 7.4L9.9 10.3Z" fill="#eff1f5" stroke="#4a5362" stroke-width="1.4" stroke-linejoin="round"/>
<path d="M0.7 8.4L5.9 2.6L9.9 10.3" fill="none" stroke="#4a5362" stroke-width="1.9" stroke-linejoin="round" stroke-linecap="round"/>
<path d="M4 15.6V11.4Q4 9.6 5.3 9.8Q6.5 10 6.5 12V17Z" fill="#2f3540"/><rect x="10.4" y="11.6" width="8" height="5.6" rx="0.8" fill="#5a9a8a" stroke="#2f6b5e" stroke-width="0.9"/><path d="M12.4 11.6V9.6Q12.4 7.8 14.4 7.8Q16.4 7.8 16.4 9.6" fill="none" stroke="#2f6b5e" stroke-width="1.2"/><path d="M12 14.4H16.8" stroke="#d8eee8" stroke-width="1"/></svg>
<svg style="left:578px;top:927px" width="21" height="14" viewBox="0 0 21 14"><path d="M0.8 4.6L3.6 2.2Q5 1.6 5.6 3L7.6 8" fill="none" stroke="#333" stroke-width="1.3"/><ellipse cx="9.8" cy="9.4" rx="3.2" ry="2.6" transform="rotate(-20 9.8 9.4)" fill="#d6eaf6" stroke="#333" stroke-width="1.2"/><ellipse cx="16.4" cy="6.8" rx="3.2" ry="2.6" transform="rotate(-20 16.4 6.8)" fill="#d6eaf6" stroke="#333" stroke-width="1.2"/><path d="M12.6 8.2L13.6 7.8M13.6 3.6L15 1.6Q16 0.8 17 1.8" fill="none" stroke="#333" stroke-width="1.1"/></svg>
<svg style="left:601px;top:925px" width="21" height="17" viewBox="0 0 21 17"><path d="M1.6 1V15.6M19 1V8" stroke="#333" stroke-width="1.5"/><path d="M2 4H18.6" stroke="#333" stroke-width="1.1"/><path d="M1.8 4L4.4 2.6V5.4ZM18.8 4L16.2 2.6V5.4Z" fill="#333"/><path d="M2 12H10" stroke="#777" stroke-width="0.9" stroke-dasharray="1.4 1"/><rect x="10.8" y="9.4" width="8.6" height="6.4" rx="0.8" fill="#555" stroke="#333" stroke-width="0.8"/><path d="M12.8 9.4V8Q12.8 6 15 6Q17.2 6 17.2 8V9.4" fill="none" stroke="#333" stroke-width="1.3"/><path d="M12.4 12.4H17.8" stroke="#bbb" stroke-width="0.9"/></svg>
<svg style="left:626px;top:925px" width="21" height="17" viewBox="0 0 21 17"><path d="M0.8 2.4H18M0.8 5.6H12M0.8 8.8H11" stroke="#444" stroke-width="1.3"/><path d="M0.8 12H12M0.8 14.6H18.6" stroke="#555" stroke-width="1.8"/><path d="M12.6 9.4a3.6 3.6 0 1 1 4.4 0v2.2h-4.4z" fill="#fbfbfb" stroke="#4d8fe8" stroke-width="1.5"/><path d="M13.3 13.8h3" stroke="#555" stroke-width="1.2"/></svg>
<svg style="left:1516px;top:953px" width="22" height="22" viewBox="0 0 22 22"><rect x="1.4" y="1.6" width="9" height="7" rx="3.5" fill="none" stroke="#d9a11a" stroke-width="2.5"/><rect x="9" y="1.6" width="9" height="7" rx="3.5" fill="none" stroke="#e2ad22" stroke-width="2.5"/><path d="M7.2 5.1h5" stroke="#8a6408" stroke-width="1.4"/><path d="M8.4 6.6v9.4l2.2-2 1.6 3.6 1.5-.7-1.6-3.5h3z" fill="#fbfbfb" stroke="#333" stroke-width="0.9" stroke-linejoin="round"/></svg>
<svg style="left:1545px;top:953px" width="22" height="22" viewBox="0 0 22 22"><path d="M1 14.6L9 2.4H16L8.4 14.6Z" fill="#d9ecf8" stroke="#2b7fd6" stroke-width="1"/><path d="M3.4 11H11M5.6 7.6H13" stroke="#2b7fd6" stroke-width="1"/><path d="M11.6 1.2L18 7.6M18 1.2L11.6 7.6" stroke="#e02626" stroke-width="2.2"/><path d="M11.4 8.6v9.4l2.2-2 1.6 3.6 1.5-.7-1.6-3.5h3z" fill="#fbfbfb" stroke="#333" stroke-width="0.9" stroke-linejoin="round"/></svg>
<svg style="left:1574px;top:953px" width="22" height="22" viewBox="0 0 22 22"><rect x="2.4" y="1.2" width="9.4" height="3.4" rx="1" fill="#f6c06a" stroke="#d9541e" stroke-width="1"/><rect x="3.8" y="4.6" width="6.6" height="4" fill="#f7c97e" stroke="#d9541e" stroke-width="1"/><rect x="1.2" y="8.6" width="11.8" height="3.6" rx="1" fill="#f6c06a" stroke="#d9541e" stroke-width="1"/><path d="M7 12.4V20" stroke="#444" stroke-width="1.3"/><path d="M11.8 8.2v9.4l2.2-2 1.6 3.6 1.5-.7-1.6-3.5h3z" fill="#fbfbfb" stroke="#333" stroke-width="0.9" stroke-linejoin="round"/></svg>
<svg style="left:1603px;top:953px" width="22" height="22" viewBox="0 0 22 22"><path d="M2 5.4L11 2.2V15.4L2 19Z" fill="#a9d6f2" stroke="#2b7fd6" stroke-width="1.5" stroke-linejoin="round"/><path d="M10.6 7.6v9.4l2.2-2 1.6 3.6 1.5-.7-1.6-3.5h3z" fill="#fbfbfb" stroke="#333" stroke-width="0.9" stroke-linejoin="round"/></svg>
<svg style="left:1632px;top:953px" width="22" height="22" viewBox="0 0 22 22"><path d="M1 6.4H11M6 1.2V11.6" stroke="#222" stroke-width="1.2"/><path d="M1 6.4l2-1.6v3.2zM11 6.4l-2-1.6v3.2zM6 1.2l-1.6 2h3.2zM6 11.6l-1.6-2h3.2z" fill="#222"/><path d="M10.4 7.4v9.4l2.2-2 1.6 3.6 1.5-.7-1.6-3.5h3z" fill="#fbfbfb" stroke="#333" stroke-width="0.9" stroke-linejoin="round"/></svg>
<svg style="left:1662px;top:955px" width="18" height="18" viewBox="0 0 18 18"><circle cx="9" cy="9" r="6" fill="none" stroke="#b4b4b4" stroke-width="3" stroke-dasharray="2.2 1.6"/></svg>
<svg style="left:1687px;top:954px" width="22" height="19" viewBox="0 0 22 19"><defs><linearGradient id="gFn" x1="0" y1="0" x2="1" y2="0"><stop offset="0" stop-color="#f2f2f2"/><stop offset="1" stop-color="#a4a8ae"/></linearGradient></defs><path d="M1.2 1.2H20L12.6 10.4V16.6H8.6V10.4Z" fill="url(#gFn)" stroke="#555b66" stroke-width="1.5" stroke-linejoin="round"/></svg>
<svg style="left:1795px;top:224px" width="13" height="12" viewBox="0 0 13 12"><path d="M0.6 0.6L12 11.4M12 0.6L0.6 11.4" stroke="#1f1f1f" stroke-width="1.6"/></svg>
<div class="vd" style="left:1333px;top:260px;height:79px;opacity:.6"></div>
<div class="hd" style="left:1334px;top:253px;width:14px;opacity:.6"></div>
<div class="hd" style="left:1334px;top:274px;width:14px;opacity:.6"></div>
<div class="hd" style="left:1334px;top:295px;width:14px;opacity:.6"></div>
<div class="hd" style="left:1334px;top:316px;width:14px;opacity:.6"></div>
<div class="hd" style="left:1334px;top:338px;width:14px;opacity:.6"></div>
<svg style="left:1327px;top:247px" width="12" height="12" viewBox="0 0 12 12"><rect x="0.6" y="0.6" width="10.8" height="10.8" rx="1.4" fill="#fafafa" stroke="#b4b4b4" stroke-width="1"/><path d="M2.6 6H9.4M6 2.6V9.4" stroke="#33449a" stroke-width="1.3"/></svg>
<svg style="left:1327px;top:289.4px" width="12" height="12" viewBox="0 0 12 12"><rect x="0.6" y="0.6" width="10.8" height="10.8" rx="1.4" fill="#fafafa" stroke="#b4b4b4" stroke-width="1"/><path d="M2.6 6H9.4M6 2.6V9.4" stroke="#33449a" stroke-width="1.3"/></svg>
<svg style="left:1327px;top:310.6px" width="12" height="12" viewBox="0 0 12 12"><rect x="0.6" y="0.6" width="10.8" height="10.8" rx="1.4" fill="#fafafa" stroke="#b4b4b4" stroke-width="1"/><path d="M2.6 6H9.4M6 2.6V9.4" stroke="#33449a" stroke-width="1.3"/></svg>
<svg style="left:1348px;top:243px" width="19" height="18" viewBox="0 0 19 18"><path d="M1 5V2.4Q1 1 2.4 1H4.6M14.4 1H16.6Q18 1 18 2.4V5M18 13V15.6Q18 17 16.6 17H14.4M4.6 17H2.4Q1 17 1 15.6V13" fill="none" stroke="#474d58" stroke-width="1.5"/><rect x="4.8" y="4.6" width="9.4" height="9" rx="2.4" fill="#e9ecf0" stroke="#474d58" stroke-width="1.5"/></svg>
<svg style="left:1348px;top:264px" width="19" height="17" viewBox="0 0 19 17"><path d="M1 2Q1 1 2 1H13.4L18 5.6V15Q18 16 17 16H2Q1 16 1 15Z" fill="#dfe3e9" stroke="#474d58" stroke-width="1.5"/><path d="M13.4 1V5.6H18" fill="none" stroke="#474d58" stroke-width="1.1"/><path d="M3.6 12V6.2Q3.6 5.2 4.6 5.2H11V12M6.4 12V8H11" fill="none" stroke="#8d97a6" stroke-width="1.2"/><circle cx="4.6" cy="12.6" r="1.2" fill="#8d97a6"/><path d="M14.6 8V13" stroke="#aab2be" stroke-width="1"/></svg>
<svg style="left:1348px;top:285px" width="19" height="18" viewBox="0 0 19 18"><rect x="1.4" y="1.2" width="8.4" height="8" rx="0.8" fill="#e9ecf0" stroke="#474d58" stroke-width="1.5"/><path d="M11.8 1.2H17.6V16.8H1.4V11.6H11.8Z" fill="url(#gW)" stroke="#474d58" stroke-width="1.5" stroke-linejoin="round"/></svg>
<svg style="left:1348px;top:306px" width="19" height="19" viewBox="0 0 19 19"><path d="M4.2 1H1.2V17.6H4.2M14.8 1H17.8V17.6H14.8" fill="none" stroke="#474d58" stroke-width="1.5"/><circle cx="8.2" cy="7.6" r="4.8" fill="#dfe3e9" stroke="#474d58" stroke-width="1.3"/><rect x="6.6" y="7" width="8.4" height="8.4" rx="2" fill="#e3e6eb" stroke="#474d58" stroke-width="1.4"/><circle cx="10" cy="9.6" r="2.6" fill="none" stroke="#9aa2ae" stroke-width="0.9"/></svg>
<svg style="left:1347.6px;top:332px" width="20" height="11" viewBox="0 0 20 11"><rect x="1.4" y="1.6" width="9" height="7" rx="3.5" fill="none" stroke="#d9a11a" stroke-width="2.5"/><rect x="9.2" y="1.6" width="9" height="7" rx="3.5" fill="none" stroke="#e2ad22" stroke-width="2.5"/><path d="M7.2 5.1h5" stroke="#8a6408" stroke-width="1.4"/></svg>
<div id="texts">
<span class="t" style="left:845px;top:10px;color:#333;font-weight:400;font-size:15px;transform:translate(0.00px,0.80px) scaleX(0.9292) rotate(0.02deg);">Autodesk Revit 2022.1 - М_Стол.rfa - 3D вид: Вид 1</span>
<span class="t" style="left:15px;top:46px;color:#fff;font-weight:400;font-size:15px;transform:translate(0.50px,0.30px) scaleX(0.9081) rotate(0.02deg);">Файл</span>
<span class="t" style="left:74px;top:46px;color:#2b2b2b;font-weight:400;font-size:15px;transform:translate(0.00px,0.30px) scaleX(0.9386) rotate(0.02deg);">Создание</span>
<span class="t" style="left:162px;top:46px;color:#2b2b2b;font-weight:400;font-size:15px;transform:translate(0.50px,0.30px) scaleX(0.9042) rotate(0.02deg);">Вставить</span>
<span class="t" style="left:245px;top:46px;color:#2b2b2b;font-weight:400;font-size:15px;transform:translate(0.00px,0.30px) scaleX(0.9869) rotate(0.02deg);">Аннотации</span>
<span class="t" style="left:343px;top:46px;color:#2b2b2b;font-weight:400;font-size:15px;transform:translate(0.00px,0.30px) scaleX(0.8843) rotate(0.02deg);">Вид</span>
<span class="t" style="left:391px;top:46px;color:#2b2b2b;font-weight:400;font-size:15px;transform:translate(0.00px,0.30px) scaleX(0.9773) rotate(0.02deg);">Управление</span>
<span class="t" style="left:497px;top:46px;color:#2b2b2b;font-weight:400;font-size:15px;transform:translate(0.00px,0.30px) scaleX(0.9658) rotate(0.02deg);">Надстройки</span>
<span class="t" style="left:601px;top:46px;color:#2b2b2b;font-weight:400;font-size:15px;transform:translate(0.00px,0.30px) scaleX(0.9811) rotate(0.02deg);">Quantification</span>
<span class="t" style="left:715px;top:46px;color:#2b2b2b;font-weight:400;font-size:15px;transform:translate(0.00px,0.30px) scaleX(0.9786) rotate(0.02deg);">Проблемы</span>
<span class="t" style="left:891px;top:46px;color:#2b2b2b;font-weight:400;font-size:15px;transform:translate(0.00px,0.30px) scaleX(0.9585) rotate(0.02deg);">BIM-совместимость</span>
<span class="t" style="left:1047px;top:46px;color:#2b2b2b;font-weight:400;font-size:15px;transform:translate(0.00px,0.30px) scaleX(0.9253) rotate(0.02deg);">ModPlus</span>
<span class="t" style="left:1125px;top:46px;color:#2b2b2b;font-weight:400;font-size:15px;transform:translate(0.70px,0.30px) scaleX(0.9797) rotate(0.02deg);">Изменить</span>
<span class="t" style="left:11px;top:117px;color:#2b2b2b;font-weight:400;font-size:15px;transform:translate(0.40px,0.35px) scaleX(0.9576) rotate(0.02deg);">Изменить</span>
<span class="t" style="left:14px;top:162px;color:#2b2b2b;font-weight:400;font-size:15px;transform:translate(0.00px,0.70px) scaleX(0.9617) rotate(0.02deg);">Выбор</span>
<span class="t" style="left:102px;top:162px;color:#2b2b2b;font-weight:400;font-size:15px;transform:translate(0.50px,0.70px) scaleX(0.9336) rotate(0.02deg);">Свойства</span>
<span class="t" style="left:200px;top:117px;color:#b4b4b4;font-weight:400;font-size:15px;transform:translate(0.80px,0.35px) scaleX(0.8932) rotate(0.02deg);">Вставить</span>
<span class="t" style="left:196px;top:162px;color:#2b2b2b;font-weight:400;font-size:15px;transform:translate(0.00px,0.70px) scaleX(0.9418) rotate(0.02deg);">Буфер обмена</span>
<span class="t" style="left:337px;top:92px;color:#2b2b2b;font-weight:400;font-size:15px;transform:translate(0.50px,0.40px) scaleX(0.9443) rotate(0.02deg);">Вырезать</span>
<span class="t" style="left:336px;top:120px;color:#2b2b2b;font-weight:400;font-size:15px;transform:translate(0.00px,0.90px) scaleX(0.9541) rotate(0.02deg);">Соединить</span>
<span class="t" style="left:356px;top:162px;color:#2b2b2b;font-weight:400;font-size:15px;transform:translate(0.00px,0.70px) scaleX(0.9703) rotate(0.02deg);">Геометрия</span>
<span class="t" style="left:592px;top:162px;color:#2b2b2b;font-weight:400;font-size:15px;transform:translate(0.00px,0.70px) scaleX(0.9605) rotate(0.02deg);">Изменить</span>
<span class="t" style="left:774px;top:162px;color:#2b2b2b;font-weight:400;font-size:15px;transform:translate(0.00px,0.70px) scaleX(0.9596) rotate(0.02deg);">Измерить</span>
<span class="t" style="left:853px;top:162px;color:#2b2b2b;font-weight:400;font-size:15px;transform:translate(0.00px,0.70px) scaleX(0.9312) rotate(0.02deg);">Создание</span>
<span class="t" style="left:967px;top:162px;color:#2b2b2b;font-weight:400;font-size:15px;transform:translate(0.50px,0.70px) scaleX(0.9332) rotate(0.02deg);">Редактор семейств</span>
<span class="t" style="left:929px;top:118px;color:#2b2b2b;font-weight:400;font-size:15px;transform:translate(0.90px,0.10px) scaleX(0.9488) rotate(0.02deg);">Загрузить в</span>
<span class="t" style="left:945px;top:136px;color:#2b2b2b;font-weight:400;font-size:15px;transform:translate(0.50px,0.30px) scaleX(0.9687) rotate(0.02deg);">проект</span>
<span class="t" style="left:1033px;top:118px;color:#2b2b2b;font-weight:400;font-size:15px;transform:translate(0.70px,0.10px) scaleX(0.9501) rotate(0.02deg);">Загрузить в</span>
<span class="t" style="left:1013px;top:136px;color:#2b2b2b;font-weight:400;font-size:15px;transform:translate(0.90px,0.30px) scaleX(0.9684) rotate(0.02deg);">проект и закрыть</span>
<span class="t" style="left:7px;top:221px;color:#2b2b2b;font-weight:400;font-size:15px;transform:translate(0.50px,0.30px) scaleX(0.9184) rotate(0.02deg);">Свойства</span>
<span class="t" style="left:9px;top:331px;color:#111;font-weight:400;font-size:15px;transform:translate(0.50px,0.40px) scaleX(0.9479) rotate(0.02deg);">Семейство: Мебель</span>
<span class="t" style="left:264px;top:330px;color:#a8a8a8;font-weight:400;font-size:15px;transform:translate(0.00px,0.40px) scaleX(0.9664) rotate(0.02deg);">Изменить тип</span>
<span class="t" style="left:7px;top:355px;color:#111;font-weight:400;font-size:15px;transform:translate(0.50px,0.90px) scaleX(0.9610) rotate(0.02deg);">Зависимости</span>
<span class="t" style="left:15px;top:378px;color:#8a8a8a;font-weight:400;font-size:15px;transform:translate(0.50px,0.40px) scaleX(0.9531) rotate(0.02deg);">Основа</span>
<span class="t" style="left:7px;top:402px;color:#111;font-weight:400;font-size:15px;transform:translate(0.50px,0.40px) scaleX(0.9469) rotate(0.02deg);">Идентификация</span>
<span class="t" style="left:15px;top:424px;color:#111;font-weight:400;font-size:15px;transform:translate(0.50px,0.40px) scaleX(0.9378) rotate(0.02deg);">Номер OmniClass</span>
<span class="t" style="left:188px;top:424px;color:#111;font-weight:400;font-size:15px;transform:translate(0.00px,0.40px) scaleX(0.8742) rotate(0.02deg);">23.40.20.24.31</span>
<span class="t" style="left:15px;top:447px;color:#8a8a8a;font-weight:400;font-size:15px;transform:translate(0.50px,0.90px) scaleX(0.9355) rotate(0.02deg);">Заголовок OmniClass</span>
<span class="t" style="left:189px;top:447px;color:#8a8a8a;font-weight:400;font-size:15px;transform:translate(0.00px,0.90px) scaleX(0.8775) rotate(0.02deg);">Desk</span>
<span class="t" style="left:8px;top:471px;color:#111;font-weight:400;font-size:15px;transform:translate(0.00px,0.70px) scaleX(0.9779) rotate(0.02deg);">Прочее</span>
<span class="t" style="left:15px;top:493px;color:#111;font-weight:400;font-size:15px;transform:translate(0.70px,0.90px) scaleX(0.9562) rotate(0.02deg);">На основе рабочей пло...</span>
<span class="t" style="left:15px;top:516px;color:#111;font-weight:400;font-size:15px;transform:translate(0.70px,0.80px) scaleX(0.9496) rotate(0.02deg);">Всегда вертикально</span>
<span class="t" style="left:15px;top:539px;color:#111;font-weight:400;font-size:15px;transform:translate(0.70px,0.90px) scaleX(0.9515) rotate(0.02deg);">При загрузке вырезать ...</span>
<span class="t" style="left:15px;top:563px;color:#111;font-weight:400;font-size:15px;transform:translate(0.70px,0.00px) scaleX(0.9637) rotate(0.02deg);">Источник визуального ...</span>
<span class="t" style="left:188px;top:563px;color:#111;font-weight:400;font-size:15px;transform:translate(0.40px,0.00px) scaleX(0.9561) rotate(0.02deg);">Геометрия семейства</span>
<span class="t" style="left:15px;top:586px;color:#111;font-weight:400;font-size:15px;transform:translate(0.70px,0.10px) scaleX(0.9542) rotate(0.02deg);">Общий</span>
<span class="t" style="left:15px;top:609px;color:#111;font-weight:400;font-size:15px;transform:translate(0.70px,0.00px) scaleX(0.9538) rotate(0.02deg);">Точка принадлежности ...</span>
<span class="t" style="left:8px;top:917px;color:#2b7fd6;font-weight:400;font-size:15px;transform:translate(0.00px,0.30px) scaleX(0.9623) rotate(0.02deg);text-decoration:underline;text-underline-offset:2px;text-decoration-thickness:1.2px;">Справка по свойствам</span>
<span class="t" style="left:283px;top:920px;color:#9a9a9a;font-weight:400;font-size:15px;transform:translate(0.00px,0.60px) scaleX(0.9804) rotate(0.02deg);">Применить</span>
<span class="t" style="left:6px;top:954px;color:#111;font-weight:400;font-size:15px;transform:translate(0.30px,0.70px) scaleX(0.9416) rotate(0.02deg);">Щелчок - выбор, TAB - варианты, CTRL - добавление, SHIFT - снятие в</span>
<span class="t" style="left:1708px;top:954px;color:#222;font-weight:400;font-size:15px;transform:translate(0.00px,0.30px) scaleX(0.9588) rotate(0.02deg);">:0</span>
<span class="t" style="left:403px;top:220px;color:#000;font-weight:700;font-size:15px;transform:translate(0.60px,0.30px) scaleX(0.8885) rotate(0.02deg);">Вид 1</span>
<span class="t" style="left:557px;top:220px;color:#333;font-weight:400;font-size:15px;transform:translate(0.00px,0.30px) scaleX(0.9446) rotate(0.02deg);">Уровень 1</span>
<span class="t" style="left:1325px;top:219px;color:#2b2b2b;font-weight:400;font-size:15px;transform:translate(0.00px,0.70px) scaleX(0.9461) rotate(0.02deg);">Диспетчер проекта - М_Стол.rfa</span>
<span class="t" style="left:1373px;top:242px;color:#111;font-weight:400;font-size:15px;transform:translate(0.30px,0.40px) scaleX(0.9258) rotate(0.02deg);">Виды (все)</span>
<span class="t" style="left:1373px;top:263px;color:#111;font-weight:400;font-size:15px;transform:translate(0.30px,0.60px) scaleX(0.9324) rotate(0.02deg);">Листы (все)</span>
<span class="t" style="left:1373px;top:284px;color:#111;font-weight:400;font-size:15px;transform:translate(0.30px,0.80px) scaleX(0.9135) rotate(0.02deg);">Семейства</span>
<span class="t" style="left:1373px;top:306px;color:#111;font-weight:400;font-size:15px;transform:translate(0.30px,0.00px) scaleX(0.9843) rotate(0.02deg);">Группы</span>
<span class="t" style="left:1373px;top:327px;color:#111;font-weight:400;font-size:15px;transform:translate(0.30px,0.20px) scaleX(0.9308) rotate(0.02deg);">Связанные файлы Revit</span>
<span class="t" style="left:404px;top:924px;color:#111;font-weight:700;font-size:13.5px;transform:translate(0.20px,0.62px) scaleX(0.8058) rotate(0.02deg);font-family:'Liberation Mono',monospace;word-spacing:-4px;">1 : 5</span>
</div>
<!-- red highlight boxes -->
<svg style="left:990px;top:30px" width="240" height="150" viewBox="990 30 240 150"><g fill="none" stroke="#ec1520" stroke-width="4.8"><rect x="1110.6" y="41.75" width="100.1" height="28.8"/><rect x="1004.3" y="70.5" width="206.4" height="93.2"/></g></svg>
<svg style="left:355px;top:200px" width="185" height="62" viewBox="355 200 185 62"><rect x="365.75" y="210.3" width="159.4" height="40.8" fill="none" stroke="#ec1520" stroke-width="4.7"/></svg>

</div>
</body></html>
